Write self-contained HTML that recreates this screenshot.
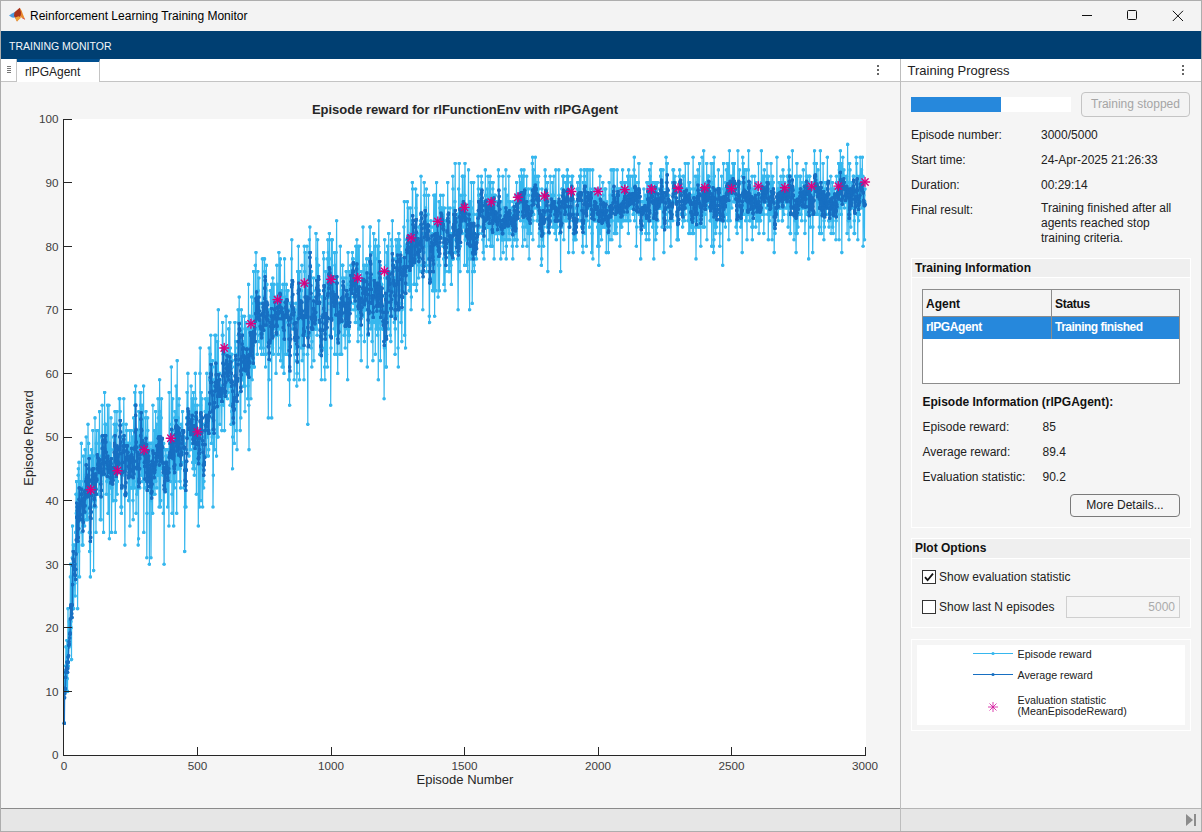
<!DOCTYPE html>
<html><head><meta charset="utf-8"><style>
*{box-sizing:border-box}
html,body{margin:0;padding:0}
body{width:1202px;height:832px;position:relative;overflow:hidden;background:#f5f5f5;font-family:"Liberation Sans",sans-serif;color:#212121}
.a{position:absolute}
.t{position:absolute;white-space:pre;font-size:12px;line-height:15px}
.b{font-weight:bold}
</style></head><body>
<!-- title bar -->
<div class="a" style="left:0;top:0;width:1202px;height:31px;background:#f3f3f3"></div>
<svg class="a" style="left:8px;top:7px" width="18" height="16" viewBox="0 0 18 16">
<polygon points="1,8.4 4.5,6.2 7.5,4.8 8.5,8 6.5,10.8 4,10.6" fill="#4a9be0"/>
<polygon points="6.5,5.2 11.7,0.8 14.2,6 12.5,9.5 9,14.6 7.5,11 6,9" fill="#a8321c"/>
<polygon points="11.7,0.8 13.5,3.5 15,7.5 17.2,12.8 14.2,11.2 12.5,9.5 13.2,6" fill="#e9872c"/>
<polygon points="6.8,10.8 10.5,9.2 13.2,10.6 9,14.6" fill="#f0a23a"/>
<polygon points="14.2,11.2 17.2,12.8 16,11" fill="#d0506a"/>
</svg>
<div class="t" style="left:30px;top:9px;color:#000">Reinforcement Learning Training Monitor</div>
<div class="a" style="left:1082px;top:15px;width:10px;height:1px;background:#111"></div>
<div class="a" style="left:1127px;top:10px;width:10px;height:10px;border:1px solid #111;border-radius:1.5px"></div>
<svg class="a" style="left:1172px;top:9.5px" width="12" height="12" viewBox="0 0 12 12"><path d="M0.8 0.8L11 11M11 0.8L0.8 11" stroke="#111" stroke-width="1"/></svg>
<!-- blue toolstrip -->
<div class="a" style="left:0;top:31px;width:1202px;height:28px;background:#003f72"></div>
<div class="t" style="left:9px;top:39px;font-size:10.5px;color:#f4f7fa">TRAINING MONITOR</div>
<!-- left document tab bar -->
<div class="a" style="left:0;top:59px;width:900px;height:23px;background:#fff;border-bottom:1px solid #c4c4c4"></div>
<div class="a" style="left:0;top:59px;width:17px;height:23px;background:#fff;border-right:1px solid #c4c4c4;border-bottom:1px solid #c4c4c4"></div>
<div class="a" style="left:7px;top:66px;width:4px;height:1px;background:#777;box-shadow:0 2px 0 #777,0 4px 0 #777,0 6px 0 #777"></div>
<div class="a" style="left:17px;top:59px;width:83px;height:23px;background:#fff;border-top:3px solid #004f8f;border-right:1px solid #c4c4c4"></div>
<div class="t" style="left:25px;top:65px;color:#222">rlPGAgent</div>
<div class="a" style="left:877px;top:65px;width:2px;height:2px;background:#666;box-shadow:0 4px 0 #666,0 8px 0 #666"></div>
<!-- plot panel -->
<div class="a" style="left:0;top:82px;width:900px;height:726px;background:#f5f5f5"></div>
<svg width="900" height="808" style="position:absolute;left:0;top:0">
<defs>
<marker id="ml" markerWidth="4" markerHeight="4" refX="2" refY="2" markerUnits="userSpaceOnUse"><circle cx="2" cy="2" r="1.8" fill="#36B7EE"/></marker>
<marker id="md" markerWidth="4" markerHeight="4" refX="2" refY="2" markerUnits="userSpaceOnUse"><circle cx="2" cy="2" r="1.9" fill="#176FC2"/></marker>
<g id="star" stroke="#D9007F" stroke-width="1.4" stroke-linecap="round"><line x1="-4.5" y1="0" x2="4.5" y2="0"/><line x1="0" y1="-4.5" x2="0" y2="4.5"/><line x1="-3.2" y1="-3.2" x2="3.2" y2="3.2"/><line x1="-3.2" y1="3.2" x2="3.2" y2="-3.2"/></g>
</defs>
<rect x="64" y="119" width="802" height="636" fill="#fff"/>
<polyline points="64.3,723.2 64.5,672.3 64.8,685.0 65.1,672.3 65.3,691.4 65.6,666.0 65.9,646.9 66.1,672.3 66.4,685.0 66.7,666.0 66.9,640.5 67.2,678.7 67.5,691.4 67.7,666.0 68.0,608.7 68.3,666.0 68.5,646.9 68.8,640.5 69.1,646.9 69.3,621.4 69.6,634.2 69.9,627.8 70.1,634.2 70.4,576.9 70.7,564.2 70.9,621.4 71.2,627.8 71.5,659.6 71.7,596.0 72.0,583.3 72.3,557.8 72.5,526.0 72.8,564.2 73.1,564.2 73.3,545.1 73.6,608.7 73.9,564.2 74.1,545.1 74.4,583.3 74.7,570.6 74.9,583.3 75.2,596.0 75.5,564.2 75.7,532.4 76.0,494.2 76.3,513.3 76.5,481.5 76.8,494.2 77.1,551.5 77.3,513.3 77.6,608.7 77.9,538.8 78.2,475.2 78.4,468.8 78.7,551.5 79.0,462.4 79.2,481.5 79.5,576.9 79.8,519.7 80.0,481.5 80.3,513.3 80.6,507.0 80.8,507.0 81.1,500.6 81.4,443.4 81.6,487.9 81.9,532.4 82.2,545.1 82.4,507.0 82.7,526.0 83.0,545.1 83.2,487.9 83.5,456.1 83.8,481.5 84.0,519.7 84.3,513.3 84.6,526.0 84.8,519.7 85.1,449.7 85.4,475.2 85.6,481.5 85.9,481.5 86.2,437.0 86.4,519.7 86.7,468.8 87.0,487.9 87.2,487.9 87.5,519.7 87.8,507.0 88.0,424.3 88.3,481.5 88.6,443.4 88.8,487.9 89.1,456.1 89.4,532.4 89.6,551.5 89.9,513.3 90.2,532.4 90.4,576.9 90.7,513.3 91.0,456.1 91.2,481.5 91.5,449.7 91.8,507.0 92.0,456.1 92.3,500.6 92.6,481.5 92.8,430.6 93.1,475.2 93.4,456.1 93.6,570.6 93.9,487.9 94.2,507.0 94.4,468.8 94.7,494.2 95.0,417.9 95.2,500.6 95.5,487.9 95.8,507.0 96.0,532.4 96.3,443.4 96.6,430.6 96.8,481.5 97.1,456.1 97.4,462.4 97.6,456.1 97.9,468.8 98.2,475.2 98.4,430.6 98.7,494.2 99.0,481.5 99.2,481.5 99.5,411.6 99.8,456.1 100.0,468.8 100.3,519.7 100.6,494.2 100.8,481.5 101.1,519.7 101.4,437.0 101.6,437.0 101.9,443.4 102.2,405.2 102.4,456.1 102.7,462.4 103.0,443.4 103.2,475.2 103.5,532.4 103.8,443.4 104.0,449.7 104.3,468.8 104.6,392.5 104.9,443.4 105.1,424.3 105.4,449.7 105.7,468.8 105.9,424.3 106.2,494.2 106.5,475.2 106.7,449.7 107.0,481.5 107.3,481.5 107.5,405.2 107.8,462.4 108.1,513.3 108.3,481.5 108.6,494.2 108.9,405.2 109.1,443.4 109.4,538.8 109.7,443.4 109.9,475.2 110.2,487.9 110.5,468.8 110.7,468.8 111.0,417.9 111.3,449.7 111.5,532.4 111.8,487.9 112.1,468.8 112.3,468.8 112.6,462.4 112.9,500.6 113.1,500.6 113.4,437.0 113.7,462.4 113.9,437.0 114.2,424.3 114.5,456.1 114.7,449.7 115.0,411.6 115.3,532.4 115.5,456.1 115.8,500.6 116.1,468.8 116.3,424.3 116.6,430.6 116.9,411.6 117.1,494.2 117.4,481.5 117.7,456.1 117.9,468.8 118.2,462.4 118.5,456.1 118.7,468.8 119.0,462.4 119.3,398.8 119.5,456.1 119.8,398.8 120.1,411.6 120.3,437.0 120.6,456.1 120.9,507.0 121.1,456.1 121.4,513.3 121.7,507.0 121.9,443.4 122.2,437.0 122.5,462.4 122.7,462.4 123.0,424.3 123.3,468.8 123.5,443.4 123.8,398.8 124.1,443.4 124.3,475.2 124.6,494.2 124.9,545.1 125.1,475.2 125.4,487.9 125.7,462.4 125.9,443.4 126.2,424.3 126.5,468.8 126.7,430.6 127.0,462.4 127.3,443.4 127.5,456.1 127.8,468.8 128.1,468.8 128.3,494.2 128.6,500.6 128.9,443.4 129.1,456.1 129.4,449.7 129.7,430.6 129.9,526.0 130.2,487.9 130.5,456.1 130.8,449.7 131.0,462.4 131.3,430.6 131.6,443.4 131.8,487.9 132.1,487.9 132.4,437.0 132.6,443.4 132.9,500.6 133.2,519.7 133.4,449.7 133.7,417.9 134.0,481.5 134.2,468.8 134.5,487.9 134.8,392.5 135.0,405.2 135.3,405.2 135.6,386.1 135.8,437.0 136.1,513.3 136.4,468.8 136.6,430.6 136.9,494.2 137.2,430.6 137.4,437.0 137.7,475.2 138.0,437.0 138.2,545.1 138.5,538.8 138.8,411.6 139.0,462.4 139.3,456.1 139.6,475.2 139.8,487.9 140.1,392.5 140.4,417.9 140.6,405.2 140.9,392.5 141.2,456.1 141.4,475.2 141.7,424.3 142.0,456.1 142.2,405.2 142.5,481.5 142.8,437.0 143.0,449.7 143.3,462.4 143.6,386.1 143.8,532.4 144.1,443.4 144.4,487.9 144.6,481.5 144.9,449.7 145.2,443.4 145.4,417.9 145.7,468.8 146.0,411.6 146.2,487.9 146.5,437.0 146.8,557.8 147.0,513.3 147.3,456.1 147.6,417.9 147.8,430.6 148.1,475.2 148.4,475.2 148.6,481.5 148.9,443.4 149.2,468.8 149.4,564.2 149.7,449.7 150.0,468.8 150.2,443.4 150.5,475.2 150.8,487.9 151.0,557.8 151.3,500.6 151.6,468.8 151.8,443.4 152.1,449.7 152.4,443.4 152.6,513.3 152.9,405.2 153.2,456.1 153.4,494.2 153.7,481.5 154.0,487.9 154.2,468.8 154.5,430.6 154.8,468.8 155.0,494.2 155.3,462.4 155.6,411.6 155.8,481.5 156.1,437.0 156.4,475.2 156.6,424.3 156.9,487.9 157.2,462.4 157.4,437.0 157.7,475.2 158.0,398.8 158.3,417.9 158.5,456.1 158.8,475.2 159.1,507.0 159.3,468.8 159.6,379.8 159.9,411.6 160.1,417.9 160.4,507.0 160.7,500.6 160.9,462.4 161.2,417.9 161.5,398.8 161.7,449.7 162.0,468.8 162.3,456.1 162.5,462.4 162.8,475.2 163.1,456.1 163.3,513.3 163.6,443.4 163.9,449.7 164.1,564.2 164.4,475.2 164.7,475.2 164.9,481.5 165.2,462.4 165.5,468.8 165.7,449.7 166.0,449.7 166.3,487.9 166.5,456.1 166.8,487.9 167.1,475.2 167.3,462.4 167.6,507.0 167.9,468.8 168.1,449.7 168.4,456.1 168.7,462.4 168.9,526.0 169.2,392.5 169.5,449.7 169.7,443.4 170.0,449.7 170.3,481.5 170.5,449.7 170.8,449.7 171.1,456.1 171.3,367.0 171.6,424.3 171.9,494.2 172.1,513.3 172.4,456.1 172.7,398.8 172.9,430.6 173.2,468.8 173.5,456.1 173.7,526.0 174.0,449.7 174.3,443.4 174.5,487.9 174.8,417.9 175.1,411.6 175.3,411.6 175.6,411.6 175.9,481.5 176.1,386.1 176.4,437.0 176.7,513.3 176.9,437.0 177.2,360.7 177.5,468.8 177.7,468.8 178.0,417.9 178.3,449.7 178.5,468.8 178.8,405.2 179.1,398.8 179.3,443.4 179.6,449.7 179.9,481.5 180.1,468.8 180.4,437.0 180.7,487.9 180.9,449.7 181.2,424.3 181.5,462.4 181.7,449.7 182.0,430.6 182.3,430.6 182.5,411.6 182.8,430.6 183.1,449.7 183.3,437.0 183.6,430.6 183.9,487.9 184.2,437.0 184.4,443.4 184.7,551.5 185.0,507.0 185.2,462.4 185.5,462.4 185.8,468.8 186.0,507.0 186.3,449.7 186.6,417.9 186.8,424.3 187.1,392.5 187.4,437.0 187.6,417.9 187.9,373.4 188.2,437.0 188.4,424.3 188.7,417.9 189.0,456.1 189.2,411.6 189.5,430.6 189.8,430.6 190.0,417.9 190.3,449.7 190.6,443.4 190.8,417.9 191.1,386.1 191.4,424.3 191.6,437.0 191.9,430.6 192.2,398.8 192.4,437.0 192.7,462.4 193.0,468.8 193.2,449.7 193.5,392.5 193.8,411.6 194.0,405.2 194.3,475.2 194.6,468.8 194.8,430.6 195.1,462.4 195.4,373.4 195.6,398.8 195.9,417.9 196.2,411.6 196.4,494.2 196.7,417.9 197.0,443.4 197.2,405.2 197.5,462.4 197.8,462.4 198.0,437.0 198.3,526.0 198.6,430.6 198.8,430.6 199.1,443.4 199.4,437.0 199.6,507.0 199.9,373.4 200.2,348.0 200.4,437.0 200.7,405.2 201.0,500.6 201.2,392.5 201.5,430.6 201.8,430.6 202.0,398.8 202.3,437.0 202.6,507.0 202.8,449.7 203.1,468.8 203.4,462.4 203.6,487.9 203.9,481.5 204.2,424.3 204.4,456.1 204.7,437.0 205.0,424.3 205.2,411.6 205.5,398.8 205.8,411.6 206.0,430.6 206.3,437.0 206.6,456.1 206.8,373.4 207.1,405.2 207.4,437.0 207.6,430.6 207.9,430.6 208.2,398.8 208.4,456.1 208.7,449.7 209.0,430.6 209.2,348.0 209.5,379.8 209.8,411.6 210.0,392.5 210.3,354.3 210.6,373.4 210.8,335.2 211.1,367.0 211.4,443.4 211.7,392.5 211.9,417.9 212.2,437.0 212.5,360.7 212.7,367.0 213.0,507.0 213.3,475.2 213.5,392.5 213.8,405.2 214.1,386.1 214.3,379.8 214.6,449.7 214.9,335.2 215.1,379.8 215.4,367.0 215.7,398.8 215.9,335.2 216.2,392.5 216.5,456.1 216.7,367.0 217.0,379.8 217.3,437.0 217.5,341.6 217.8,379.8 218.1,437.0 218.3,309.8 218.6,405.2 218.9,405.2 219.1,386.1 219.4,392.5 219.7,373.4 219.9,424.3 220.2,379.8 220.5,386.1 220.7,392.5 221.0,386.1 221.3,398.8 221.5,398.8 221.8,430.6 222.1,392.5 222.3,335.2 222.6,322.5 222.9,335.2 223.1,354.3 223.4,405.2 223.7,348.0 223.9,379.8 224.2,379.8 224.5,430.6 224.7,386.1 225.0,392.5 225.3,392.5 225.5,354.3 225.8,386.1 226.1,316.2 226.3,367.0 226.6,379.8 226.9,360.7 227.1,354.3 227.4,398.8 227.7,386.1 227.9,348.0 228.2,392.5 228.5,373.4 228.7,328.9 229.0,379.8 229.3,367.0 229.5,386.1 229.8,322.5 230.1,405.2 230.3,348.0 230.6,379.8 230.9,354.3 231.1,424.3 231.4,360.7 231.7,411.6 231.9,354.3 232.2,360.7 232.5,468.8 232.7,437.0 233.0,398.8 233.3,424.3 233.5,386.1 233.8,405.2 234.1,386.1 234.3,443.4 234.6,367.0 234.9,322.5 235.1,360.7 235.4,386.1 235.7,341.6 235.9,386.1 236.2,430.6 236.5,360.7 236.7,379.8 237.0,449.7 237.3,354.3 237.6,360.7 237.8,348.0 238.1,309.8 238.4,335.2 238.6,354.3 238.9,322.5 239.2,297.1 239.4,335.2 239.7,341.6 240.0,392.5 240.2,430.6 240.5,354.3 240.8,417.9 241.0,360.7 241.3,309.8 241.6,341.6 241.8,379.8 242.1,328.9 242.4,316.2 242.6,379.8 242.9,341.6 243.2,373.4 243.4,367.0 243.7,386.1 244.0,373.4 244.2,348.0 244.5,316.2 244.8,386.1 245.0,411.6 245.3,367.0 245.6,367.0 245.8,322.5 246.1,367.0 246.4,360.7 246.6,328.9 246.9,367.0 247.2,373.4 247.4,348.0 247.7,398.8 248.0,386.1 248.2,360.7 248.5,284.4 248.8,405.2 249.0,449.7 249.3,316.2 249.6,316.2 249.8,322.5 250.1,341.6 250.4,367.0 250.6,328.9 250.9,398.8 251.2,341.6 251.4,316.2 251.7,297.1 252.0,328.9 252.2,379.8 252.5,354.3 252.8,367.0 253.0,360.7 253.3,354.3 253.6,271.6 253.8,303.4 254.1,367.0 254.4,367.0 254.6,328.9 254.9,303.4 255.2,341.6 255.4,265.3 255.7,328.9 256.0,252.6 256.2,316.2 256.5,297.1 256.8,316.2 257.0,309.8 257.3,354.3 257.6,309.8 257.8,271.6 258.1,290.7 258.4,316.2 258.6,328.9 258.9,278.0 259.2,341.6 259.4,335.2 259.7,316.2 260.0,303.4 260.2,335.2 260.5,348.0 260.8,335.2 261.0,322.5 261.3,328.9 261.6,354.3 261.8,328.9 262.1,303.4 262.4,258.9 262.6,322.5 262.9,303.4 263.2,348.0 263.4,322.5 263.7,354.3 264.0,297.1 264.2,258.9 264.5,258.9 264.8,271.6 265.1,297.1 265.3,316.2 265.6,367.0 265.9,290.7 266.1,354.3 266.4,265.3 266.7,316.2 266.9,284.4 267.2,341.6 267.5,316.2 267.7,316.2 268.0,341.6 268.3,417.9 268.5,322.5 268.8,335.2 269.1,379.8 269.3,309.8 269.6,360.7 269.9,328.9 270.1,322.5 270.4,290.7 270.7,328.9 270.9,341.6 271.2,297.1 271.5,284.4 271.7,417.9 272.0,303.4 272.3,335.2 272.5,348.0 272.8,278.0 273.1,316.2 273.3,354.3 273.6,335.2 273.9,297.1 274.1,284.4 274.4,322.5 274.7,309.8 274.9,297.1 275.2,328.9 275.5,309.8 275.7,316.2 276.0,373.4 276.3,335.2 276.5,335.2 276.8,265.3 277.1,322.5 277.3,328.9 277.6,284.4 277.9,335.2 278.1,290.7 278.4,354.3 278.7,303.4 278.9,252.6 279.2,328.9 279.5,297.1 279.7,322.5 280.0,265.3 280.3,258.9 280.5,360.7 280.8,348.0 281.1,303.4 281.3,290.7 281.6,290.7 281.9,309.8 282.1,367.0 282.4,303.4 282.7,316.2 282.9,284.4 283.2,367.0 283.5,303.4 283.7,322.5 284.0,373.4 284.3,328.9 284.5,258.9 284.8,297.1 285.1,322.5 285.3,303.4 285.6,354.3 285.9,303.4 286.1,303.4 286.4,284.4 286.7,316.2 286.9,290.7 287.2,309.8 287.5,354.3 287.7,309.8 288.0,290.7 288.3,322.5 288.5,322.5 288.8,379.8 289.1,379.8 289.3,348.0 289.6,405.2 289.9,341.6 290.1,303.4 290.4,335.2 290.7,309.8 290.9,303.4 291.2,322.5 291.5,258.9 291.8,239.8 292.0,297.1 292.3,284.4 292.6,328.9 292.8,322.5 293.1,303.4 293.4,309.8 293.6,309.8 293.9,316.2 294.2,379.8 294.4,328.9 294.7,354.3 295.0,309.8 295.2,328.9 295.5,348.0 295.8,322.5 296.0,303.4 296.3,348.0 296.6,360.7 296.8,386.1 297.1,373.4 297.4,341.6 297.6,271.6 297.9,316.2 298.2,290.7 298.4,246.2 298.7,290.7 299.0,309.8 299.2,309.8 299.5,379.8 299.8,271.6 300.0,297.1 300.3,303.4 300.6,335.2 300.8,297.1 301.1,348.0 301.4,290.7 301.6,309.8 301.9,265.3 302.2,360.7 302.4,328.9 302.7,322.5 303.0,316.2 303.2,348.0 303.5,328.9 303.8,354.3 304.0,379.8 304.3,246.2 304.6,271.6 304.8,335.2 305.1,252.6 305.4,316.2 305.6,309.8 305.9,335.2 306.2,335.2 306.4,290.7 306.7,284.4 307.0,246.2 307.2,328.9 307.5,354.3 307.8,424.3 308.0,335.2 308.3,290.7 308.6,322.5 308.8,290.7 309.1,252.6 309.4,239.8 309.6,278.0 309.9,227.1 310.2,265.3 310.4,322.5 310.7,335.2 311.0,316.2 311.2,348.0 311.5,271.6 311.8,367.0 312.0,341.6 312.3,316.2 312.6,316.2 312.8,303.4 313.1,297.1 313.4,309.8 313.6,278.0 313.9,360.7 314.2,316.2 314.4,328.9 314.7,309.8 315.0,303.4 315.2,328.9 315.5,328.9 315.8,290.7 316.0,233.5 316.3,328.9 316.6,258.9 316.8,290.7 317.1,335.2 317.4,303.4 317.6,239.8 317.9,278.0 318.2,297.1 318.5,265.3 318.7,316.2 319.0,316.2 319.3,322.5 319.5,290.7 319.8,354.3 320.1,328.9 320.3,354.3 320.6,354.3 320.9,341.6 321.1,348.0 321.4,379.8 321.7,328.9 321.9,297.1 322.2,297.1 322.5,348.0 322.7,316.2 323.0,316.2 323.3,309.8 323.5,252.6 323.8,258.9 324.1,290.7 324.3,322.5 324.6,367.0 324.9,379.8 325.1,309.8 325.4,316.2 325.7,271.6 325.9,309.8 326.2,360.7 326.5,354.3 326.7,309.8 327.0,303.4 327.3,258.9 327.5,367.0 327.8,239.8 328.1,297.1 328.3,252.6 328.6,284.4 328.9,297.1 329.1,271.6 329.4,233.5 329.7,258.9 329.9,303.4 330.2,335.2 330.5,290.7 330.7,405.2 331.0,348.0 331.3,309.8 331.5,239.8 331.8,297.1 332.1,297.1 332.3,239.8 332.6,316.2 332.9,309.8 333.1,309.8 333.4,297.1 333.7,278.0 333.9,316.2 334.2,328.9 334.5,252.6 334.7,354.3 335.0,265.3 335.3,297.1 335.5,335.2 335.8,322.5 336.1,252.6 336.3,284.4 336.6,220.8 336.9,303.4 337.1,354.3 337.4,322.5 337.7,373.4 337.9,341.6 338.2,322.5 338.5,303.4 338.7,316.2 339.0,328.9 339.3,309.8 339.5,303.4 339.8,303.4 340.1,354.3 340.3,246.2 340.6,316.2 340.9,316.2 341.1,322.5 341.4,290.7 341.7,354.3 341.9,322.5 342.2,278.0 342.5,265.3 342.7,265.3 343.0,297.1 343.3,303.4 343.5,303.4 343.8,278.0 344.1,335.2 344.4,297.1 344.6,316.2 344.9,335.2 345.2,348.0 345.4,328.9 345.7,303.4 346.0,278.0 346.2,271.6 346.5,297.1 346.8,303.4 347.0,322.5 347.3,322.5 347.6,379.8 347.8,284.4 348.1,252.6 348.4,290.7 348.6,335.2 348.9,328.9 349.2,341.6 349.4,335.2 349.7,271.6 350.0,290.7 350.2,271.6 350.5,278.0 350.8,265.3 351.0,303.4 351.3,309.8 351.6,278.0 351.8,290.7 352.1,284.4 352.4,252.6 352.6,258.9 352.9,265.3 353.2,258.9 353.4,278.0 353.7,297.1 354.0,303.4 354.2,290.7 354.5,309.8 354.8,278.0 355.0,303.4 355.3,322.5 355.6,265.3 355.8,246.2 356.1,265.3 356.4,297.1 356.6,271.6 356.9,239.8 357.2,322.5 357.4,316.2 357.7,309.8 358.0,341.6 358.2,246.2 358.5,328.9 358.8,316.2 359.0,297.1 359.3,246.2 359.6,303.4 359.8,328.9 360.1,322.5 360.4,290.7 360.6,316.2 360.9,335.2 361.2,360.7 361.4,271.6 361.7,290.7 362.0,278.0 362.2,309.8 362.5,290.7 362.8,297.1 363.0,227.1 363.3,316.2 363.6,265.3 363.8,297.1 364.1,303.4 364.4,341.6 364.6,297.1 364.9,265.3 365.2,284.4 365.4,309.8 365.7,309.8 366.0,284.4 366.2,278.0 366.5,258.9 366.8,278.0 367.0,265.3 367.3,367.0 367.6,303.4 367.8,335.2 368.1,328.9 368.4,335.2 368.6,258.9 368.9,309.8 369.2,322.5 369.4,284.4 369.7,246.2 370.0,227.1 370.2,227.1 370.5,290.7 370.8,328.9 371.1,297.1 371.3,303.4 371.6,297.1 371.9,252.6 372.1,341.6 372.4,290.7 372.7,316.2 372.9,360.7 373.2,278.0 373.5,290.7 373.7,233.5 374.0,322.5 374.3,278.0 374.5,303.4 374.8,278.0 375.1,246.2 375.3,354.3 375.6,239.8 375.9,316.2 376.1,328.9 376.4,290.7 376.7,290.7 376.9,328.9 377.2,258.9 377.5,246.2 377.7,335.2 378.0,309.8 378.3,379.8 378.5,246.2 378.8,220.8 379.1,265.3 379.3,252.6 379.6,322.5 379.9,328.9 380.1,265.3 380.4,360.7 380.7,309.8 380.9,290.7 381.2,271.6 381.5,284.4 381.7,284.4 382.0,309.8 382.3,328.9 382.5,322.5 382.8,316.2 383.1,328.9 383.3,328.9 383.6,309.8 383.9,341.6 384.1,398.8 384.4,348.0 384.7,239.8 384.9,278.0 385.2,297.1 385.5,335.2 385.7,316.2 386.0,367.0 386.3,367.0 386.5,309.8 386.8,252.6 387.1,265.3 387.3,316.2 387.6,246.2 387.9,278.0 388.1,284.4 388.4,328.9 388.7,233.5 388.9,271.6 389.2,278.0 389.5,309.8 389.7,278.0 390.0,278.0 390.3,335.2 390.5,309.8 390.8,341.6 391.1,316.2 391.3,239.8 391.6,290.7 391.9,271.6 392.1,246.2 392.4,220.8 392.7,271.6 392.9,316.2 393.2,271.6 393.5,258.9 393.7,284.4 394.0,284.4 394.3,322.5 394.5,278.0 394.8,309.8 395.1,354.3 395.3,328.9 395.6,278.0 395.9,239.8 396.1,316.2 396.4,258.9 396.7,246.2 396.9,246.2 397.2,284.4 397.5,239.8 397.8,290.7 398.0,348.0 398.3,367.0 398.6,303.4 398.8,233.5 399.1,284.4 399.4,290.7 399.6,239.8 399.9,246.2 400.2,278.0 400.4,252.6 400.7,258.9 401.0,322.5 401.2,258.9 401.5,303.4 401.8,341.6 402.0,309.8 402.3,271.6 402.6,258.9 402.8,278.0 403.1,258.9 403.4,278.0 403.6,290.7 403.9,227.1 404.2,290.7 404.4,201.7 404.7,335.2 405.0,284.4 405.2,246.2 405.5,348.0 405.8,252.6 406.0,246.2 406.3,246.2 406.6,239.8 406.8,265.3 407.1,265.3 407.4,201.7 407.6,220.8 407.9,284.4 408.2,208.0 408.4,271.6 408.7,252.6 409.0,239.8 409.2,290.7 409.5,278.0 409.8,290.7 410.0,239.8 410.3,208.0 410.6,239.8 410.8,233.5 411.1,309.8 411.4,297.1 411.6,220.8 411.9,265.3 412.2,220.8 412.4,182.6 412.7,189.0 413.0,265.3 413.2,246.2 413.5,252.6 413.8,246.2 414.0,284.4 414.3,284.4 414.6,239.8 414.8,239.8 415.1,227.1 415.4,239.8 415.6,189.0 415.9,208.0 416.2,233.5 416.4,290.7 416.7,284.4 417.0,195.3 417.2,258.9 417.5,233.5 417.8,246.2 418.0,258.9 418.3,258.9 418.6,278.0 418.8,265.3 419.1,227.1 419.4,227.1 419.6,258.9 419.9,271.6 420.2,239.8 420.4,220.8 420.7,214.4 421.0,176.2 421.2,214.4 421.5,239.8 421.8,246.2 422.0,265.3 422.3,271.6 422.6,271.6 422.8,309.8 423.1,265.3 423.4,233.5 423.6,252.6 423.9,252.6 424.2,182.6 424.4,195.3 424.7,227.1 425.0,220.8 425.3,227.1 425.5,208.0 425.8,246.2 426.1,265.3 426.3,189.0 426.6,271.6 426.9,227.1 427.1,220.8 427.4,233.5 427.7,227.1 427.9,214.4 428.2,258.9 428.5,195.3 428.7,258.9 429.0,265.3 429.3,316.2 429.5,322.5 429.8,252.6 430.1,239.8 430.3,278.0 430.6,265.3 430.9,220.8 431.1,227.1 431.4,252.6 431.7,246.2 431.9,233.5 432.2,265.3 432.5,290.7 432.7,246.2 433.0,265.3 433.3,290.7 433.5,227.1 433.8,195.3 434.1,239.8 434.3,220.8 434.6,316.2 434.9,246.2 435.1,195.3 435.4,195.3 435.7,239.8 435.9,290.7 436.2,258.9 436.5,182.6 436.7,246.2 437.0,220.8 437.3,258.9 437.5,220.8 437.8,233.5 438.1,297.1 438.3,239.8 438.6,265.3 438.9,246.2 439.1,201.7 439.4,290.7 439.7,265.3 439.9,208.0 440.2,227.1 440.5,195.3 440.7,220.8 441.0,214.4 441.3,233.5 441.5,208.0 441.8,208.0 442.1,233.5 442.3,233.5 442.6,220.8 442.9,246.2 443.1,195.3 443.4,227.1 443.7,258.9 443.9,284.4 444.2,227.1 444.5,208.0 444.7,258.9 445.0,290.7 445.3,239.8 445.5,271.6 445.8,265.3 446.1,220.8 446.3,239.8 446.6,220.8 446.9,252.6 447.1,220.8 447.4,227.1 447.7,182.6 447.9,208.0 448.2,233.5 448.5,214.4 448.7,271.6 449.0,252.6 449.3,233.5 449.5,233.5 449.8,271.6 450.1,208.0 450.3,233.5 450.6,239.8 450.9,265.3 451.1,239.8 451.4,284.4 451.7,233.5 452.0,252.6 452.2,258.9 452.5,258.9 452.8,176.2 453.0,189.0 453.3,258.9 453.6,239.8 453.8,208.0 454.1,233.5 454.4,233.5 454.6,220.8 454.9,201.7 455.2,163.5 455.4,252.6 455.7,252.6 456.0,239.8 456.2,246.2 456.5,246.2 456.8,220.8 457.0,239.8 457.3,233.5 457.6,214.4 457.8,258.9 458.1,309.8 458.4,258.9 458.6,189.0 458.9,227.1 459.2,163.5 459.4,246.2 459.7,220.8 460.0,271.6 460.2,246.2 460.5,227.1 460.8,195.3 461.0,214.4 461.3,214.4 461.6,208.0 461.8,233.5 462.1,233.5 462.4,176.2 462.6,176.2 462.9,227.1 463.2,208.0 463.4,220.8 463.7,208.0 464.0,220.8 464.2,176.2 464.5,265.3 464.8,195.3 465.0,163.5 465.3,239.8 465.6,239.8 465.8,227.1 466.1,220.8 466.4,227.1 466.6,265.3 466.9,208.0 467.2,239.8 467.4,233.5 467.7,271.6 468.0,233.5 468.2,214.4 468.5,169.9 468.8,233.5 469.0,220.8 469.3,258.9 469.6,309.8 469.8,201.7 470.1,233.5 470.4,227.1 470.6,201.7 470.9,252.6 471.2,258.9 471.4,182.6 471.7,227.1 472.0,208.0 472.2,303.4 472.5,271.6 472.8,252.6 473.0,233.5 473.3,233.5 473.6,182.6 473.8,214.4 474.1,265.3 474.4,271.6 474.6,258.9 474.9,239.8 475.2,233.5 475.4,246.2 475.7,252.6 476.0,246.2 476.2,239.8 476.5,258.9 476.8,214.4 477.0,227.1 477.3,239.8 477.6,233.5 477.9,214.4 478.1,176.2 478.4,189.0 478.7,195.3 478.9,233.5 479.2,214.4 479.5,201.7 479.7,227.1 480.0,201.7 480.3,214.4 480.5,195.3 480.8,195.3 481.1,189.0 481.3,176.2 481.6,208.0 481.9,182.6 482.1,233.5 482.4,227.1 482.7,201.7 482.9,239.8 483.2,252.6 483.5,214.4 483.7,214.4 484.0,258.9 484.3,201.7 484.5,201.7 484.8,227.1 485.1,214.4 485.3,169.9 485.6,195.3 485.9,220.8 486.1,201.7 486.4,246.2 486.7,208.0 486.9,220.8 487.2,189.0 487.5,227.1 487.7,227.1 488.0,176.2 488.3,227.1 488.5,227.1 488.8,220.8 489.1,239.8 489.3,201.7 489.6,182.6 489.9,227.1 490.1,176.2 490.4,246.2 490.7,182.6 490.9,201.7 491.2,195.3 491.5,233.5 491.7,227.1 492.0,246.2 492.3,246.2 492.5,208.0 492.8,189.0 493.1,182.6 493.3,214.4 493.6,201.7 493.9,201.7 494.1,258.9 494.4,214.4 494.7,195.3 494.9,233.5 495.2,195.3 495.5,220.8 495.7,233.5 496.0,201.7 496.3,214.4 496.5,233.5 496.8,227.1 497.1,233.5 497.3,214.4 497.6,239.8 497.9,201.7 498.1,201.7 498.4,169.9 498.7,201.7 498.9,176.2 499.2,233.5 499.5,227.1 499.7,208.0 500.0,233.5 500.3,201.7 500.5,233.5 500.8,258.9 501.1,201.7 501.3,227.1 501.6,220.8 501.9,239.8 502.1,239.8 502.4,239.8 502.7,227.1 502.9,176.2 503.2,252.6 503.5,208.0 503.7,233.5 504.0,233.5 504.3,208.0 504.6,214.4 504.8,239.8 505.1,189.0 505.4,227.1 505.6,214.4 505.9,169.9 506.2,258.9 506.4,246.2 506.7,201.7 507.0,227.1 507.2,195.3 507.5,227.1 507.8,220.8 508.0,239.8 508.3,214.4 508.6,227.1 508.8,176.2 509.1,214.4 509.4,233.5 509.6,201.7 509.9,239.8 510.2,201.7 510.4,220.8 510.7,227.1 511.0,227.1 511.2,214.4 511.5,214.4 511.8,233.5 512.0,208.0 512.3,246.2 512.6,227.1 512.8,258.9 513.1,208.0 513.4,208.0 513.6,201.7 513.9,201.7 514.2,214.4 514.4,227.1 514.7,239.8 515.0,239.8 515.2,214.4 515.5,233.5 515.8,214.4 516.0,195.3 516.3,195.3 516.6,182.6 516.8,246.2 517.1,239.8 517.4,201.7 517.6,208.0 517.9,195.3 518.2,214.4 518.4,195.3 518.7,195.3 519.0,201.7 519.2,201.7 519.5,176.2 519.8,201.7 520.0,208.0 520.3,195.3 520.6,220.8 520.8,182.6 521.1,195.3 521.4,169.9 521.6,208.0 521.9,214.4 522.2,176.2 522.4,214.4 522.7,246.2 523.0,227.1 523.2,220.8 523.5,176.2 523.8,176.2 524.0,169.9 524.3,220.8 524.6,208.0 524.8,239.8 525.1,189.0 525.4,220.8 525.6,189.0 525.9,201.7 526.2,227.1 526.4,214.4 526.7,176.2 527.0,246.2 527.2,208.0 527.5,201.7 527.8,201.7 528.0,233.5 528.3,189.0 528.6,220.8 528.8,195.3 529.1,258.9 529.4,227.1 529.6,201.7 529.9,214.4 530.2,214.4 530.4,214.4 530.7,233.5 531.0,189.0 531.2,208.0 531.5,214.4 531.8,214.4 532.1,201.7 532.3,163.5 532.6,157.2 532.9,239.8 533.1,220.8 533.4,169.9 533.7,214.4 533.9,176.2 534.2,182.6 534.5,195.3 534.7,208.0 535.0,182.6 535.3,157.2 535.5,201.7 535.8,201.7 536.1,201.7 536.3,182.6 536.6,208.0 536.9,176.2 537.1,220.8 537.4,201.7 537.7,220.8 537.9,182.6 538.2,208.0 538.5,176.2 538.7,189.0 539.0,246.2 539.3,233.5 539.5,220.8 539.8,233.5 540.1,208.0 540.3,208.0 540.6,214.4 540.9,220.8 541.1,220.8 541.4,265.3 541.7,258.9 541.9,189.0 542.2,239.8 542.5,214.4 542.7,208.0 543.0,201.7 543.3,227.1 543.5,246.2 543.8,233.5 544.1,201.7 544.3,195.3 544.6,220.8 544.9,208.0 545.1,169.9 545.4,176.2 545.7,195.3 545.9,201.7 546.2,214.4 546.5,195.3 546.7,189.0 547.0,227.1 547.3,182.6 547.5,182.6 547.8,271.6 548.1,227.1 548.3,233.5 548.6,220.8 548.9,208.0 549.1,233.5 549.4,214.4 549.7,227.1 549.9,227.1 550.2,176.2 550.5,214.4 550.7,208.0 551.0,201.7 551.3,195.3 551.5,214.4 551.8,208.0 552.1,220.8 552.3,182.6 552.6,195.3 552.9,227.1 553.1,214.4 553.4,195.3 553.7,195.3 553.9,176.2 554.2,227.1 554.5,220.8 554.7,214.4 555.0,233.5 555.3,208.0 555.5,227.1 555.8,169.9 556.1,201.7 556.3,239.8 556.6,227.1 556.9,208.0 557.1,227.1 557.4,201.7 557.7,214.4 558.0,201.7 558.2,208.0 558.5,220.8 558.8,169.9 559.0,195.3 559.3,214.4 559.6,233.5 559.8,220.8 560.1,201.7 560.4,233.5 560.6,271.6 560.9,201.7 561.2,214.4 561.4,201.7 561.7,227.1 562.0,189.0 562.2,189.0 562.5,201.7 562.8,176.2 563.0,220.8 563.3,176.2 563.6,176.2 563.8,239.8 564.1,195.3 564.4,214.4 564.6,214.4 564.9,208.0 565.2,201.7 565.4,220.8 565.7,182.6 566.0,182.6 566.2,220.8 566.5,195.3 566.8,176.2 567.0,220.8 567.3,169.9 567.6,189.0 567.8,201.7 568.1,214.4 568.4,176.2 568.6,252.6 568.9,227.1 569.2,208.0 569.4,227.1 569.7,220.8 570.0,201.7 570.2,214.4 570.5,214.4 570.8,182.6 571.0,189.0 571.3,189.0 571.6,195.3 571.8,176.2 572.1,214.4 572.4,208.0 572.6,176.2 572.9,220.8 573.2,252.6 573.4,233.5 573.7,220.8 574.0,239.8 574.2,201.7 574.5,220.8 574.8,208.0 575.0,239.8 575.3,233.5 575.6,233.5 575.8,214.4 576.1,239.8 576.4,214.4 576.6,208.0 576.9,220.8 577.2,189.0 577.4,195.3 577.7,182.6 578.0,214.4 578.2,189.0 578.5,195.3 578.8,214.4 579.0,189.0 579.3,189.0 579.6,176.2 579.8,220.8 580.1,214.4 580.4,195.3 580.6,176.2 580.9,169.9 581.2,208.0 581.4,220.8 581.7,227.1 582.0,227.1 582.2,220.8 582.5,246.2 582.8,214.4 583.0,252.6 583.3,182.6 583.6,208.0 583.8,208.0 584.1,169.9 584.4,176.2 584.6,169.9 584.9,233.5 585.2,182.6 585.5,220.8 585.7,208.0 586.0,208.0 586.3,246.2 586.5,195.3 586.8,169.9 587.1,220.8 587.3,195.3 587.6,208.0 587.9,169.9 588.1,208.0 588.4,201.7 588.7,195.3 588.9,201.7 589.2,195.3 589.5,227.1 589.7,208.0 590.0,169.9 590.3,195.3 590.5,189.0 590.8,214.4 591.1,195.3 591.3,195.3 591.6,252.6 591.9,214.4 592.1,233.5 592.4,195.3 592.7,169.9 592.9,258.9 593.2,214.4 593.5,214.4 593.7,208.0 594.0,201.7 594.3,189.0 594.5,220.8 594.8,189.0 595.1,220.8 595.3,208.0 595.6,201.7 595.9,195.3 596.1,220.8 596.4,220.8 596.7,195.3 596.9,208.0 597.2,189.0 597.5,227.1 597.7,246.2 598.0,201.7 598.3,195.3 598.5,195.3 598.8,265.3 599.1,246.2 599.3,201.7 599.6,195.3 599.9,176.2 600.1,233.5 600.4,189.0 600.7,208.0 600.9,214.4 601.2,220.8 601.5,239.8 601.7,220.8 602.0,220.8 602.3,201.7 602.5,227.1 602.8,182.6 603.1,195.3 603.3,208.0 603.6,220.8 603.9,220.8 604.1,227.1 604.4,220.8 604.7,208.0 604.9,189.0 605.2,227.1 605.5,214.4 605.7,189.0 606.0,201.7 606.3,252.6 606.5,201.7 606.8,208.0 607.1,220.8 607.3,227.1 607.6,233.5 607.9,227.1 608.1,220.8 608.4,252.6 608.7,220.8 608.9,208.0 609.2,182.6 609.5,214.4 609.7,208.0 610.0,239.8 610.3,195.3 610.5,220.8 610.8,220.8 611.1,169.9 611.4,220.8 611.6,195.3 611.9,239.8 612.2,220.8 612.4,189.0 612.7,195.3 613.0,169.9 613.2,201.7 613.5,201.7 613.8,189.0 614.0,169.9 614.3,233.5 614.6,201.7 614.8,195.3 615.1,208.0 615.4,233.5 615.6,195.3 615.9,201.7 616.2,227.1 616.4,195.3 616.7,233.5 617.0,189.0 617.2,169.9 617.5,189.0 617.8,189.0 618.0,220.8 618.3,208.0 618.6,220.8 618.8,214.4 619.1,195.3 619.4,189.0 619.6,208.0 619.9,246.2 620.2,214.4 620.4,208.0 620.7,189.0 621.0,227.1 621.2,182.6 621.5,220.8 621.8,227.1 622.0,220.8 622.3,189.0 622.6,169.9 622.8,214.4 623.1,220.8 623.4,214.4 623.6,189.0 623.9,220.8 624.2,189.0 624.4,182.6 624.7,201.7 625.0,195.3 625.2,195.3 625.5,182.6 625.8,220.8 626.0,189.0 626.3,208.0 626.6,214.4 626.8,208.0 627.1,208.0 627.4,220.8 627.6,176.2 627.9,214.4 628.2,182.6 628.4,233.5 628.7,169.9 629.0,182.6 629.2,208.0 629.5,208.0 629.8,201.7 630.0,220.8 630.3,176.2 630.6,195.3 630.8,208.0 631.1,208.0 631.4,195.3 631.6,208.0 631.9,189.0 632.2,201.7 632.4,176.2 632.7,195.3 633.0,208.0 633.2,214.4 633.5,214.4 633.8,214.4 634.0,169.9 634.3,157.2 634.6,220.8 634.8,176.2 635.1,208.0 635.4,176.2 635.6,208.0 635.9,182.6 636.2,189.0 636.4,246.2 636.7,227.1 637.0,189.0 637.2,189.0 637.5,208.0 637.8,195.3 638.0,201.7 638.3,182.6 638.6,201.7 638.9,163.5 639.1,201.7 639.4,214.4 639.7,201.7 639.9,201.7 640.2,227.1 640.5,214.4 640.7,258.9 641.0,214.4 641.3,233.5 641.5,208.0 641.8,214.4 642.1,201.7 642.3,208.0 642.6,208.0 642.9,208.0 643.1,214.4 643.4,214.4 643.7,220.8 643.9,189.0 644.2,201.7 644.5,227.1 644.7,208.0 645.0,201.7 645.3,208.0 645.5,195.3 645.8,233.5 646.1,201.7 646.3,239.8 646.6,220.8 646.9,182.6 647.1,201.7 647.4,208.0 647.7,182.6 647.9,182.6 648.2,220.8 648.5,208.0 648.7,233.5 649.0,239.8 649.3,201.7 649.5,169.9 649.8,220.8 650.1,176.2 650.3,195.3 650.6,195.3 650.9,201.7 651.1,163.5 651.4,201.7 651.7,189.0 651.9,220.8 652.2,189.0 652.5,182.6 652.7,227.1 653.0,195.3 653.3,208.0 653.5,201.7 653.8,258.9 654.1,220.8 654.3,182.6 654.6,182.6 654.9,189.0 655.1,189.0 655.4,195.3 655.7,239.8 655.9,182.6 656.2,214.4 656.5,233.5 656.7,227.1 657.0,182.6 657.3,182.6 657.5,189.0 657.8,220.8 658.1,195.3 658.3,208.0 658.6,201.7 658.9,208.0 659.1,195.3 659.4,208.0 659.7,189.0 659.9,208.0 660.2,208.0 660.5,176.2 660.7,169.9 661.0,189.0 661.3,169.9 661.5,195.3 661.8,208.0 662.1,227.1 662.3,195.3 662.6,182.6 662.9,189.0 663.1,169.9 663.4,227.1 663.7,220.8 663.9,252.6 664.2,220.8 664.5,227.1 664.8,195.3 665.0,208.0 665.3,195.3 665.6,214.4 665.8,201.7 666.1,157.2 666.4,195.3 666.6,195.3 666.9,163.5 667.2,163.5 667.4,227.1 667.7,201.7 668.0,195.3 668.2,208.0 668.5,201.7 668.8,195.3 669.0,201.7 669.3,208.0 669.6,220.8 669.8,201.7 670.1,227.1 670.4,201.7 670.6,214.4 670.9,246.2 671.2,201.7 671.4,214.4 671.7,208.0 672.0,201.7 672.2,208.0 672.5,182.6 672.8,220.8 673.0,169.9 673.3,189.0 673.6,169.9 673.8,189.0 674.1,195.3 674.4,182.6 674.6,201.7 674.9,176.2 675.2,182.6 675.4,201.7 675.7,201.7 676.0,201.7 676.2,201.7 676.5,201.7 676.8,214.4 677.0,239.8 677.3,220.8 677.6,239.8 677.8,208.0 678.1,208.0 678.4,239.8 678.6,201.7 678.9,189.0 679.2,201.7 679.4,176.2 679.7,169.9 680.0,176.2 680.2,182.6 680.5,195.3 680.8,195.3 681.0,189.0 681.3,214.4 681.6,214.4 681.8,214.4 682.1,214.4 682.4,208.0 682.6,227.1 682.9,220.8 683.2,176.2 683.4,201.7 683.7,176.2 684.0,189.0 684.2,214.4 684.5,220.8 684.8,201.7 685.0,214.4 685.3,163.5 685.6,195.3 685.8,201.7 686.1,201.7 686.4,189.0 686.6,208.0 686.9,189.0 687.2,195.3 687.4,201.7 687.7,201.7 688.0,220.8 688.2,163.5 688.5,189.0 688.8,233.5 689.0,182.6 689.3,201.7 689.6,182.6 689.8,201.7 690.1,233.5 690.4,189.0 690.6,214.4 690.9,220.8 691.2,208.0 691.5,227.1 691.7,227.1 692.0,195.3 692.3,233.5 692.5,227.1 692.8,208.0 693.1,157.2 693.3,189.0 693.6,233.5 693.9,201.7 694.1,208.0 694.4,208.0 694.7,220.8 694.9,195.3 695.2,176.2 695.5,227.1 695.7,189.0 696.0,258.9 696.3,220.8 696.5,227.1 696.8,176.2 697.1,182.6 697.3,189.0 697.6,208.0 697.9,169.9 698.1,201.7 698.4,227.1 698.7,176.2 698.9,201.7 699.2,208.0 699.5,163.5 699.7,220.8 700.0,227.1 700.3,214.4 700.5,208.0 700.8,246.2 701.1,201.7 701.3,208.0 701.6,195.3 701.9,189.0 702.1,157.2 702.4,189.0 702.7,214.4 702.9,227.1 703.2,195.3 703.5,201.7 703.7,150.8 704.0,189.0 704.3,208.0 704.5,227.1 704.8,208.0 705.1,214.4 705.3,189.0 705.6,189.0 705.9,208.0 706.1,182.6 706.4,201.7 706.7,163.5 706.9,239.8 707.2,189.0 707.5,208.0 707.7,176.2 708.0,176.2 708.3,176.2 708.5,201.7 708.8,176.2 709.1,201.7 709.3,201.7 709.6,208.0 709.9,201.7 710.1,220.8 710.4,201.7 710.7,220.8 710.9,182.6 711.2,163.5 711.5,201.7 711.7,246.2 712.0,195.3 712.3,208.0 712.5,189.0 712.8,182.6 713.1,163.5 713.3,246.2 713.6,252.6 713.9,239.8 714.1,157.2 714.4,176.2 714.7,189.0 714.9,227.1 715.2,201.7 715.5,201.7 715.7,233.5 716.0,201.7 716.3,214.4 716.5,227.1 716.8,220.8 717.1,189.0 717.3,195.3 717.6,195.3 717.9,195.3 718.1,189.0 718.4,169.9 718.7,201.7 719.0,189.0 719.2,214.4 719.5,214.4 719.8,246.2 720.0,233.5 720.3,189.0 720.6,195.3 720.8,214.4 721.1,201.7 721.4,201.7 721.6,176.2 721.9,220.8 722.2,201.7 722.4,208.0 722.7,265.3 723.0,208.0 723.2,201.7 723.5,163.5 723.8,189.0 724.0,220.8 724.3,208.0 724.6,208.0 724.8,201.7 725.1,189.0 725.4,227.1 725.6,182.6 725.9,195.3 726.2,195.3 726.4,169.9 726.7,189.0 727.0,214.4 727.2,163.5 727.5,182.6 727.8,220.8 728.0,163.5 728.3,189.0 728.6,189.0 728.8,239.8 729.1,176.2 729.4,150.8 729.6,176.2 729.9,182.6 730.2,220.8 730.4,182.6 730.7,176.2 731.0,189.0 731.2,195.3 731.5,195.3 731.8,208.0 732.0,176.2 732.3,189.0 732.6,189.0 732.8,163.5 733.1,176.2 733.4,189.0 733.6,201.7 733.9,189.0 734.2,163.5 734.4,163.5 734.7,201.7 735.0,201.7 735.2,189.0 735.5,189.0 735.8,189.0 736.0,227.1 736.3,201.7 736.6,220.8 736.8,214.4 737.1,233.5 737.4,214.4 737.6,195.3 737.9,150.8 738.2,182.6 738.4,189.0 738.7,189.0 739.0,208.0 739.2,220.8 739.5,169.9 739.8,214.4 740.0,214.4 740.3,214.4 740.6,214.4 740.8,227.1 741.1,220.8 741.4,195.3 741.6,201.7 741.9,182.6 742.2,252.6 742.4,176.2 742.7,157.2 743.0,214.4 743.2,163.5 743.5,176.2 743.8,201.7 744.0,214.4 744.3,195.3 744.6,169.9 744.9,208.0 745.1,189.0 745.4,195.3 745.7,220.8 745.9,189.0 746.2,169.9 746.5,189.0 746.7,208.0 747.0,239.8 747.3,201.7 747.5,214.4 747.8,195.3 748.1,208.0 748.3,169.9 748.6,150.8 748.9,182.6 749.1,214.4 749.4,220.8 749.7,201.7 749.9,189.0 750.2,220.8 750.5,182.6 750.7,208.0 751.0,201.7 751.3,201.7 751.5,189.0 751.8,227.1 752.1,176.2 752.3,239.8 752.6,208.0 752.9,214.4 753.1,227.1 753.4,201.7 753.7,189.0 753.9,201.7 754.2,214.4 754.5,208.0 754.7,176.2 755.0,201.7 755.3,208.0 755.5,182.6 755.8,227.1 756.1,201.7 756.3,189.0 756.6,220.8 756.9,220.8 757.1,208.0 757.4,201.7 757.7,195.3 757.9,189.0 758.2,220.8 758.5,163.5 758.7,201.7 759.0,233.5 759.3,214.4 759.5,214.4 759.8,195.3 760.1,201.7 760.3,220.8 760.6,220.8 760.9,201.7 761.1,195.3 761.4,150.8 761.7,182.6 761.9,201.7 762.2,214.4 762.5,201.7 762.7,176.2 763.0,201.7 763.3,182.6 763.5,176.2 763.8,233.5 764.1,214.4 764.3,169.9 764.6,189.0 764.9,201.7 765.1,201.7 765.4,189.0 765.7,195.3 765.9,201.7 766.2,176.2 766.5,182.6 766.7,208.0 767.0,163.5 767.3,182.6 767.5,176.2 767.8,214.4 768.1,182.6 768.3,239.8 768.6,176.2 768.9,214.4 769.1,195.3 769.4,201.7 769.7,220.8 769.9,214.4 770.2,182.6 770.5,208.0 770.7,214.4 771.0,163.5 771.3,189.0 771.5,182.6 771.8,208.0 772.1,239.8 772.4,189.0 772.6,176.2 772.9,182.6 773.2,182.6 773.4,214.4 773.7,208.0 774.0,227.1 774.2,252.6 774.5,220.8 774.8,208.0 775.0,233.5 775.3,208.0 775.6,214.4 775.8,201.7 776.1,214.4 776.4,201.7 776.6,208.0 776.9,157.2 777.2,208.0 777.4,214.4 777.7,189.0 778.0,201.7 778.2,220.8 778.5,208.0 778.8,189.0 779.0,182.6 779.3,201.7 779.6,208.0 779.8,182.6 780.1,208.0 780.4,195.3 780.6,201.7 780.9,176.2 781.2,201.7 781.4,182.6 781.7,208.0 782.0,195.3 782.2,220.8 782.5,220.8 782.8,189.0 783.0,169.9 783.3,189.0 783.6,176.2 783.8,214.4 784.1,201.7 784.4,208.0 784.6,182.6 784.9,189.0 785.2,195.3 785.4,201.7 785.7,189.0 786.0,189.0 786.2,201.7 786.5,208.0 786.8,201.7 787.0,208.0 787.3,176.2 787.6,176.2 787.8,195.3 788.1,227.1 788.4,214.4 788.6,157.2 788.9,157.2 789.2,169.9 789.4,208.0 789.7,189.0 790.0,208.0 790.2,233.5 790.5,233.5 790.8,201.7 791.0,189.0 791.3,176.2 791.6,189.0 791.8,182.6 792.1,201.7 792.4,150.8 792.6,208.0 792.9,208.0 793.2,208.0 793.4,201.7 793.7,214.4 794.0,239.8 794.2,214.4 794.5,208.0 794.8,189.0 795.0,220.8 795.3,208.0 795.6,176.2 795.8,233.5 796.1,252.6 796.4,195.3 796.6,220.8 796.9,163.5 797.2,233.5 797.4,201.7 797.7,176.2 798.0,227.1 798.2,208.0 798.5,195.3 798.8,208.0 799.1,189.0 799.3,214.4 799.6,195.3 799.9,176.2 800.1,189.0 800.4,208.0 800.7,176.2 800.9,214.4 801.2,182.6 801.5,189.0 801.7,220.8 802.0,201.7 802.3,208.0 802.5,208.0 802.8,195.3 803.1,208.0 803.3,169.9 803.6,201.7 803.9,182.6 804.1,195.3 804.4,182.6 804.7,201.7 804.9,233.5 805.2,220.8 805.5,195.3 805.7,182.6 806.0,163.5 806.3,176.2 806.5,189.0 806.8,214.4 807.1,195.3 807.3,195.3 807.6,176.2 807.9,182.6 808.1,208.0 808.4,208.0 808.7,258.9 808.9,201.7 809.2,201.7 809.5,176.2 809.7,176.2 810.0,195.3 810.3,201.7 810.5,227.1 810.8,189.0 811.1,214.4 811.3,208.0 811.6,208.0 811.9,182.6 812.1,195.3 812.4,195.3 812.7,252.6 812.9,227.1 813.2,201.7 813.5,189.0 813.7,189.0 814.0,195.3 814.3,163.5 814.5,150.8 814.8,182.6 815.1,189.0 815.3,189.0 815.6,189.0 815.9,176.2 816.1,214.4 816.4,163.5 816.7,182.6 816.9,182.6 817.2,189.0 817.5,214.4 817.7,214.4 818.0,169.9 818.3,189.0 818.5,189.0 818.8,189.0 819.1,201.7 819.3,227.1 819.6,233.5 819.9,189.0 820.1,189.0 820.4,150.8 820.7,195.3 820.9,189.0 821.2,214.4 821.5,233.5 821.7,208.0 822.0,208.0 822.3,214.4 822.5,208.0 822.8,201.7 823.1,163.5 823.3,182.6 823.6,201.7 823.9,239.8 824.1,220.8 824.4,227.1 824.7,195.3 825.0,189.0 825.2,182.6 825.5,214.4 825.8,195.3 826.0,208.0 826.3,214.4 826.6,208.0 826.8,201.7 827.1,189.0 827.4,157.2 827.6,189.0 827.9,182.6 828.2,195.3 828.4,182.6 828.7,220.8 829.0,227.1 829.2,214.4 829.5,220.8 829.8,208.0 830.0,201.7 830.3,201.7 830.6,208.0 830.8,176.2 831.1,233.5 831.4,189.0 831.6,214.4 831.9,208.0 832.2,195.3 832.4,182.6 832.7,227.1 833.0,220.8 833.2,233.5 833.5,208.0 833.8,189.0 834.0,195.3 834.3,189.0 834.6,201.7 834.8,195.3 835.1,208.0 835.4,214.4 835.6,201.7 835.9,239.8 836.2,220.8 836.4,176.2 836.7,182.6 837.0,214.4 837.2,182.6 837.5,208.0 837.8,189.0 838.0,195.3 838.3,195.3 838.6,163.5 838.8,201.7 839.1,239.8 839.4,169.9 839.6,163.5 839.9,189.0 840.2,189.0 840.4,150.8 840.7,208.0 841.0,163.5 841.2,214.4 841.5,163.5 841.8,252.6 842.0,201.7 842.3,189.0 842.6,182.6 842.8,157.2 843.1,189.0 843.4,189.0 843.6,189.0 843.9,169.9 844.2,176.2 844.4,208.0 844.7,201.7 845.0,189.0 845.2,201.7 845.5,201.7 845.8,182.6 846.0,195.3 846.3,189.0 846.6,176.2 846.8,189.0 847.1,233.5 847.4,201.7 847.6,144.4 847.9,182.6 848.2,208.0 848.4,220.8 848.7,220.8 849.0,239.8 849.2,201.7 849.5,163.5 849.8,214.4 850.0,169.9 850.3,195.3 850.6,208.0 850.8,227.1 851.1,195.3 851.4,201.7 851.6,182.6 851.9,189.0 852.2,208.0 852.5,182.6 852.7,182.6 853.0,182.6 853.3,176.2 853.5,176.2 853.8,189.0 854.1,233.5 854.3,220.8 854.6,233.5 854.9,189.0 855.1,189.0 855.4,201.7 855.7,195.3 855.9,208.0 856.2,157.2 856.5,195.3 856.7,163.5 857.0,176.2 857.3,201.7 857.5,214.4 857.8,239.8 858.1,189.0 858.3,182.6 858.6,220.8 858.9,195.3 859.1,201.7 859.4,214.4 859.7,176.2 859.9,189.0 860.2,157.2 860.5,201.7 860.7,195.3 861.0,182.6 861.3,195.3 861.5,169.9 861.8,208.0 862.1,195.3 862.3,157.2 862.6,189.0 862.9,176.2 863.1,246.2 863.4,195.3 863.7,195.3 863.9,201.7 864.2,189.0 864.5,239.8 864.7,201.7 865.0,189.0" fill="none" stroke="#36B7EE" stroke-width="1.2" marker-start="url(#ml)" marker-mid="url(#ml)" marker-end="url(#ml)"/>
<polyline points="64.3,723.2 64.5,697.8 64.8,693.5 65.1,688.2 65.3,688.9 65.6,677.4 65.9,672.3 66.1,669.8 66.4,672.3 66.7,667.2 66.9,662.1 67.2,668.5 67.5,672.3 67.7,668.5 68.0,657.1 68.3,662.1 68.5,655.8 68.8,645.6 69.1,641.8 69.3,644.3 69.6,638.0 69.9,634.2 70.1,632.9 70.4,618.9 70.7,607.4 70.9,604.9 71.2,604.9 71.5,610.0 71.7,613.8 72.0,617.6 72.3,604.9 72.5,584.6 72.8,565.5 73.1,559.1 73.3,551.5 73.6,561.7 73.9,569.3 74.1,565.5 74.4,569.3 74.7,574.4 74.9,569.3 75.2,575.6 75.5,579.5 75.7,569.3 76.0,554.0 76.3,540.0 76.5,517.1 76.8,503.1 77.1,507.0 77.3,510.8 77.6,529.9 77.9,541.3 78.2,537.5 78.4,521.0 78.7,528.6 79.0,499.3 79.2,487.9 79.5,508.2 79.8,518.4 80.0,504.4 80.3,514.6 80.6,519.7 80.8,505.7 81.1,501.9 81.4,494.2 81.6,489.2 81.9,494.2 82.2,501.9 82.4,503.1 82.7,519.7 83.0,531.1 83.2,522.2 83.5,504.4 83.8,499.3 84.0,498.1 84.3,491.7 84.6,499.3 84.8,512.0 85.1,505.7 85.4,496.8 85.6,490.4 85.9,481.5 86.2,465.0 86.4,479.0 86.7,477.7 87.0,479.0 87.2,480.2 87.5,496.8 87.8,494.2 88.0,485.3 88.3,484.1 88.6,475.2 88.8,468.8 89.1,458.6 89.4,480.2 89.6,494.2 89.9,508.2 90.2,517.1 90.4,541.3 90.7,537.5 91.0,518.4 91.2,512.0 91.5,495.5 91.8,481.5 92.0,470.1 92.3,479.0 92.6,479.0 92.8,475.2 93.1,468.8 93.4,468.8 93.6,482.8 93.9,484.1 94.2,499.3 94.4,498.1 94.7,505.7 95.0,475.2 95.2,477.7 95.5,473.9 95.8,481.5 96.0,489.2 96.3,494.2 96.6,480.2 96.8,479.0 97.1,468.8 97.4,454.8 97.6,457.4 97.9,465.0 98.2,463.7 98.4,458.6 98.7,465.0 99.0,470.1 99.2,472.6 99.5,459.9 99.8,465.0 100.0,459.9 100.3,467.5 100.6,470.1 100.8,484.1 101.1,496.8 101.4,490.4 101.6,473.9 101.9,463.7 102.2,448.4 102.4,435.7 102.7,440.8 103.0,442.1 103.2,448.4 103.5,473.9 103.8,471.3 104.0,468.8 104.3,473.9 104.6,457.4 104.9,439.5 105.1,435.7 105.4,435.7 105.7,435.7 105.9,442.1 106.2,452.3 106.5,462.4 106.7,462.4 107.0,465.0 107.3,476.4 107.5,458.6 107.8,456.1 108.1,468.8 108.3,468.8 108.6,471.3 108.9,471.3 109.1,467.5 109.4,472.6 109.7,465.0 109.9,461.2 110.2,477.7 110.5,482.8 110.7,468.8 111.0,463.7 111.3,458.6 111.5,467.5 111.8,471.3 112.1,471.3 112.3,481.5 112.6,484.1 112.9,477.7 113.1,480.2 113.4,473.9 113.7,472.6 113.9,467.5 114.2,452.3 114.5,443.4 114.7,445.9 115.0,435.7 115.3,454.8 115.5,461.2 115.8,470.1 116.1,473.9 116.3,476.4 116.6,456.1 116.9,447.2 117.1,445.9 117.4,448.4 117.7,454.8 117.9,462.4 118.2,472.6 118.5,465.0 118.7,462.4 119.0,463.7 119.3,449.7 119.5,448.4 119.8,437.0 120.1,425.6 120.3,420.5 120.6,431.9 120.9,442.1 121.1,453.5 121.4,473.9 121.7,487.9 121.9,485.3 122.2,471.3 122.5,472.6 122.7,462.4 123.0,445.9 123.3,451.0 123.5,452.3 123.8,439.5 124.1,435.7 124.3,445.9 124.6,451.0 124.9,471.3 125.1,486.6 125.4,495.5 125.7,493.0 125.9,482.8 126.2,458.6 126.5,457.4 126.7,445.9 127.0,445.9 127.3,445.9 127.5,452.3 127.8,452.3 128.1,459.9 128.3,466.3 128.6,477.7 128.9,475.2 129.1,472.6 129.4,468.8 129.7,456.1 129.9,461.2 130.2,470.1 130.5,470.1 130.8,470.1 131.0,476.4 131.3,457.4 131.6,448.4 131.8,454.8 132.1,462.4 132.4,457.4 132.6,459.9 132.9,471.3 133.2,477.7 133.4,470.1 133.7,466.3 134.0,473.9 134.2,467.5 134.5,461.2 134.8,449.7 135.0,447.2 135.3,431.9 135.6,415.4 135.8,405.2 136.1,429.4 136.4,442.1 136.6,447.2 136.9,468.8 137.2,467.5 137.4,452.3 137.7,453.5 138.0,454.8 138.2,465.0 138.5,486.6 138.8,481.5 139.0,479.0 139.3,482.8 139.6,468.8 139.8,458.6 140.1,454.8 140.4,445.9 140.6,435.7 140.9,419.2 141.2,412.8 141.4,429.4 141.7,430.6 142.0,440.8 142.2,443.4 142.5,448.4 142.8,440.8 143.0,445.9 143.3,447.2 143.6,443.4 143.8,453.5 144.1,454.8 144.4,462.4 144.6,466.3 144.9,479.0 145.2,461.2 145.4,456.1 145.7,452.3 146.0,438.3 146.2,445.9 146.5,444.6 146.8,472.6 147.0,481.5 147.3,490.4 147.6,476.4 147.8,475.2 148.1,458.6 148.4,451.0 148.6,456.1 148.9,461.2 149.2,468.8 149.4,486.6 149.7,481.5 150.0,479.0 150.2,479.0 150.5,480.2 150.8,465.0 151.0,486.6 151.3,493.0 151.6,498.1 151.8,491.7 152.1,484.1 152.4,461.2 152.6,463.7 152.9,451.0 153.2,453.5 153.4,462.4 153.7,470.1 154.0,465.0 154.2,477.7 154.5,472.6 154.8,467.5 155.0,470.1 155.3,465.0 155.6,453.5 155.8,463.7 156.1,457.4 156.4,453.5 156.6,445.9 156.9,461.2 157.2,457.4 157.4,457.4 157.7,457.4 158.0,452.3 158.3,438.3 158.5,437.0 158.8,444.6 159.1,451.0 159.3,465.0 159.6,457.4 159.9,448.4 160.1,437.0 160.4,437.0 160.7,443.4 160.9,459.9 161.2,461.2 161.5,457.4 161.7,445.9 162.0,439.5 162.3,438.3 162.5,447.2 162.8,462.4 163.1,463.7 163.3,472.6 163.6,470.1 163.9,467.5 164.1,485.3 164.4,489.2 164.7,481.5 164.9,489.2 165.2,491.7 165.5,472.6 165.7,467.5 166.0,462.4 166.3,463.7 166.5,462.4 166.8,466.3 167.1,471.3 167.3,473.9 167.6,477.7 167.9,480.2 168.1,472.6 168.4,468.8 168.7,468.8 168.9,472.6 169.2,457.4 169.5,457.4 169.7,454.8 170.0,452.3 170.3,443.4 170.5,454.8 170.8,454.8 171.1,457.4 171.3,440.8 171.6,429.4 171.9,438.3 172.1,451.0 172.4,451.0 172.7,457.4 172.9,458.6 173.2,453.5 173.5,442.1 173.7,456.1 174.0,466.3 174.3,468.8 174.5,472.6 174.8,465.0 175.1,442.1 175.3,434.5 175.6,428.1 175.9,426.8 176.1,420.5 176.4,425.6 176.7,445.9 176.9,451.0 177.2,426.8 177.5,443.4 177.7,449.7 178.0,430.6 178.3,433.2 178.5,454.8 178.8,442.1 179.1,428.1 179.3,433.2 179.6,433.2 179.9,435.7 180.1,448.4 180.4,456.1 180.7,465.0 180.9,465.0 181.2,453.5 181.5,452.3 181.7,454.8 182.0,443.4 182.3,439.5 182.5,437.0 182.8,430.6 183.1,430.6 183.3,431.9 183.6,431.9 183.9,447.2 184.2,448.4 184.4,447.2 184.7,470.1 185.0,485.3 185.2,480.2 185.5,485.3 185.8,490.4 186.0,481.5 186.3,470.1 186.6,461.2 186.8,453.5 187.1,438.3 187.4,424.3 187.6,417.9 187.9,409.0 188.2,411.6 188.4,417.9 188.7,414.1 189.0,421.7 189.2,429.4 189.5,428.1 189.8,429.4 190.0,429.4 190.3,428.1 190.6,434.5 190.8,431.9 191.1,423.0 191.4,424.3 191.6,421.7 191.9,419.2 192.2,415.4 192.4,425.6 192.7,433.2 193.0,439.5 193.2,443.4 193.5,442.1 193.8,437.0 194.0,425.6 194.3,426.8 194.6,430.6 194.8,438.3 195.1,448.4 195.4,442.1 195.6,426.8 195.9,416.6 196.2,412.8 196.4,419.2 196.7,428.1 197.0,437.0 197.2,434.5 197.5,444.6 197.8,438.3 198.0,442.1 198.3,458.6 198.6,463.7 198.8,457.4 199.1,453.5 199.4,453.5 199.6,449.7 199.9,438.3 200.2,421.7 200.4,420.5 200.7,414.1 201.0,412.8 201.2,416.6 201.5,433.2 201.8,431.9 202.0,430.6 202.3,417.9 202.6,440.8 202.8,444.6 203.1,452.3 203.4,465.0 203.6,475.2 203.9,470.1 204.2,465.0 204.4,462.4 204.7,457.4 205.0,444.6 205.2,430.6 205.5,425.6 205.8,416.6 206.0,415.4 206.3,417.9 206.6,426.8 206.8,421.7 207.1,420.5 207.4,421.7 207.6,420.5 207.9,415.4 208.2,420.5 208.4,430.6 208.7,433.2 209.0,433.2 209.2,416.6 209.5,412.8 209.8,403.9 210.0,392.5 210.3,377.2 210.6,382.3 210.8,373.4 211.1,364.5 211.4,374.7 211.7,382.3 211.9,391.2 212.2,411.6 212.5,410.3 212.7,395.0 213.0,417.9 213.3,429.4 213.5,420.5 213.8,429.4 214.1,433.2 214.3,407.7 214.6,402.7 214.9,391.2 215.1,386.1 215.4,382.3 215.7,386.1 215.9,363.2 216.2,374.7 216.5,389.9 216.7,389.9 217.0,386.1 217.3,406.5 217.5,396.3 217.8,381.0 218.1,395.0 218.3,381.0 218.6,374.7 218.9,387.4 219.1,388.7 219.4,379.8 219.7,392.5 219.9,396.3 220.2,391.2 220.5,391.2 220.7,391.2 221.0,393.8 221.3,388.7 221.5,392.5 221.8,401.4 222.1,401.4 222.3,391.2 222.6,375.9 222.9,363.2 223.1,348.0 223.4,350.5 223.7,353.0 223.9,364.5 224.2,373.4 224.5,388.7 224.7,384.8 225.0,393.8 225.3,396.3 225.5,391.2 225.8,382.3 226.1,368.3 226.3,363.2 226.6,360.7 226.9,362.0 227.1,355.6 227.4,372.1 227.7,375.9 227.9,369.6 228.2,375.9 228.5,379.8 228.7,365.8 229.0,364.5 229.3,368.3 229.5,367.0 229.8,356.9 230.1,372.1 230.3,365.8 230.6,368.3 230.9,362.0 231.1,382.3 231.4,373.4 231.7,386.1 231.9,381.0 232.2,382.3 232.5,391.2 232.7,406.5 233.0,403.9 233.3,417.9 233.5,423.0 233.8,410.3 234.1,400.1 234.3,409.0 234.6,397.6 234.9,384.8 235.1,375.9 235.4,375.9 235.7,355.6 235.9,359.4 236.2,381.0 236.5,381.0 236.7,379.8 237.0,401.4 237.3,395.0 237.6,381.0 237.8,378.5 238.1,364.5 238.4,341.6 238.6,341.6 238.9,334.0 239.2,323.8 239.4,328.9 239.7,330.2 240.0,337.8 240.2,359.4 240.5,370.9 240.8,387.4 241.0,391.2 241.3,374.7 241.6,356.9 241.8,362.0 242.1,344.1 242.4,335.2 242.6,349.2 242.9,349.2 243.2,348.0 243.4,355.6 243.7,369.6 244.0,368.3 244.2,369.6 244.5,358.1 244.8,362.0 245.0,367.0 245.3,365.8 245.6,369.6 245.8,370.9 246.1,367.0 246.4,356.9 246.6,349.2 246.9,349.2 247.2,359.4 247.4,355.6 247.7,363.2 248.0,374.7 248.2,373.4 248.5,355.6 248.8,367.0 249.0,377.2 249.3,363.2 249.6,354.3 249.8,362.0 250.1,349.2 250.4,332.7 250.6,335.2 250.9,351.8 251.2,355.6 251.4,350.5 251.7,336.5 252.0,336.5 252.2,332.7 252.5,335.2 252.8,345.4 253.0,358.1 253.3,363.2 253.6,341.6 253.8,331.4 254.1,331.4 254.4,332.7 254.6,327.6 254.9,334.0 255.2,341.6 255.4,321.2 255.7,313.6 256.0,298.4 256.2,300.9 256.5,292.0 256.8,302.2 257.0,298.4 257.3,318.7 257.6,317.4 257.8,312.3 258.1,307.3 258.4,308.5 258.6,303.4 258.9,297.1 259.2,311.1 259.4,320.0 259.7,320.0 260.0,314.9 260.2,326.3 260.5,327.6 260.8,327.6 261.0,328.9 261.3,334.0 261.6,337.8 261.8,334.0 262.1,327.6 262.4,314.9 262.6,313.6 262.9,303.4 263.2,307.3 263.4,311.1 263.7,330.2 264.0,325.1 264.2,316.2 264.5,298.4 264.8,288.2 265.1,276.7 265.3,280.5 265.6,302.2 265.9,308.5 266.1,325.1 266.4,318.7 266.7,318.7 266.9,302.2 267.2,312.3 267.5,304.7 267.7,314.9 268.0,320.0 268.3,346.7 268.5,342.9 268.8,346.7 269.1,359.4 269.3,353.0 269.6,341.6 269.9,342.9 270.1,340.3 270.4,322.5 270.7,326.3 270.9,322.5 271.2,316.2 271.5,308.5 271.7,334.0 272.0,328.9 272.3,327.6 272.5,337.8 272.8,336.5 273.1,316.2 273.3,326.3 273.6,326.3 273.9,316.2 274.1,317.4 274.4,318.7 274.7,309.8 274.9,302.2 275.2,308.5 275.5,313.6 275.7,312.3 276.0,325.1 276.3,332.7 276.5,334.0 276.8,325.1 277.1,326.3 277.3,317.4 277.6,307.3 277.9,307.3 278.1,312.3 278.4,318.7 278.7,313.6 278.9,307.3 279.2,306.0 279.5,307.3 279.7,300.9 280.0,293.3 280.3,294.5 280.5,300.9 280.8,311.1 281.1,307.3 281.3,312.3 281.6,318.7 281.9,308.5 282.1,312.3 282.4,312.3 282.7,317.4 282.9,316.2 283.2,327.6 283.5,314.9 283.7,318.7 284.0,330.2 284.3,339.1 284.5,317.4 284.8,316.2 285.1,316.2 285.3,302.2 285.6,307.3 285.9,316.2 286.1,317.4 286.4,309.8 286.7,312.3 286.9,299.6 287.2,300.9 287.5,311.1 287.7,316.2 288.0,311.1 288.3,317.4 288.5,320.0 288.8,325.1 289.1,339.1 289.3,350.5 289.6,367.0 289.9,370.9 290.1,355.6 290.4,346.7 290.7,339.1 290.9,318.7 291.2,314.9 291.5,306.0 291.8,286.9 292.0,284.4 292.3,280.5 292.6,281.8 292.8,294.5 293.1,307.3 293.4,309.8 293.6,314.9 293.9,312.3 294.2,323.8 294.4,328.9 294.7,337.8 295.0,337.8 295.2,340.3 295.5,334.0 295.8,332.7 296.0,322.5 296.3,330.2 296.6,336.5 296.8,344.1 297.1,354.3 297.4,362.0 297.6,346.7 297.9,337.8 298.2,318.7 298.4,293.3 298.7,283.1 299.0,290.7 299.2,289.4 299.5,307.3 299.8,312.3 300.0,313.6 300.3,312.3 300.6,317.4 300.8,300.9 301.1,316.2 301.4,314.9 301.6,316.2 301.9,302.2 302.2,314.9 302.4,311.1 302.7,317.4 303.0,318.7 303.2,335.2 303.5,328.9 303.8,334.0 304.0,345.4 304.3,331.4 304.6,316.2 304.8,317.4 305.1,297.1 305.4,284.4 305.6,297.1 305.9,309.8 306.2,309.8 306.4,317.4 306.7,311.1 307.0,298.4 307.2,297.1 307.5,300.9 307.8,327.6 308.0,337.8 308.3,346.7 308.6,345.4 308.8,332.7 309.1,298.4 309.4,279.3 309.6,276.7 309.9,257.6 310.2,252.6 310.4,266.6 310.7,285.6 311.0,293.3 311.2,317.4 311.5,318.7 311.8,327.6 312.0,328.9 312.3,328.9 312.6,322.5 312.8,328.9 313.1,314.9 313.4,308.5 313.6,300.9 313.9,309.8 314.2,312.3 314.4,318.7 314.7,318.7 315.0,323.8 315.2,317.4 315.5,320.0 315.8,312.3 316.0,297.1 316.3,302.2 316.6,288.2 316.8,280.5 317.1,289.4 317.4,303.4 317.6,285.6 317.9,289.4 318.2,290.7 318.5,276.7 318.7,279.3 319.0,294.5 319.3,303.4 319.5,302.2 319.8,320.0 320.1,322.5 320.3,330.2 320.6,336.5 320.9,346.7 321.1,345.4 321.4,355.6 321.7,350.5 321.9,339.1 322.2,330.2 322.5,330.2 322.7,317.4 323.0,314.9 323.3,317.4 323.5,308.5 323.8,290.7 324.1,285.6 324.3,286.9 324.6,298.4 324.9,323.8 325.1,334.0 325.4,339.1 325.7,328.9 325.9,317.4 326.2,313.6 326.5,322.5 326.7,321.2 327.0,327.6 327.3,317.4 327.5,318.7 327.8,295.8 328.1,293.3 328.3,283.1 328.6,288.2 328.9,274.2 329.1,280.5 329.4,267.8 329.7,269.1 329.9,272.9 330.2,280.5 330.5,284.4 330.7,318.7 331.0,336.5 331.3,337.8 331.5,318.7 331.8,320.0 332.1,298.4 332.3,276.7 332.6,278.0 332.9,292.0 333.1,294.5 333.4,294.5 333.7,302.2 333.9,302.2 334.2,306.0 334.5,294.5 334.7,306.0 335.0,303.4 335.3,299.6 335.5,300.9 335.8,314.9 336.1,294.5 336.3,298.4 336.6,283.1 336.9,276.7 337.1,283.1 337.4,297.1 337.7,314.9 337.9,339.1 338.2,342.9 338.5,332.7 338.7,331.4 339.0,322.5 339.3,316.2 339.5,312.3 339.8,312.3 340.1,320.0 340.3,303.4 340.6,304.7 340.9,307.3 341.1,311.1 341.4,298.4 341.7,320.0 341.9,321.2 342.2,313.6 342.5,302.2 342.7,297.1 343.0,285.6 343.3,281.8 343.5,286.9 343.8,289.4 344.1,303.4 344.4,303.4 344.6,306.0 344.9,312.3 345.2,326.3 345.4,325.1 345.7,326.3 346.0,318.7 346.2,306.0 346.5,295.8 346.8,290.7 347.0,294.5 347.3,303.4 347.6,325.1 347.8,322.5 348.1,312.3 348.4,306.0 348.6,308.5 348.9,298.4 349.2,309.8 349.4,326.3 349.7,322.5 350.0,313.6 350.2,302.2 350.5,289.4 350.8,275.5 351.0,281.8 351.3,285.6 351.6,286.9 351.8,289.4 352.1,293.3 352.4,283.1 352.6,272.9 352.9,270.4 353.2,264.0 353.4,262.7 353.7,271.6 354.0,280.5 354.2,285.6 354.5,295.8 354.8,295.8 355.0,297.1 355.3,300.9 355.6,295.8 355.8,283.1 356.1,280.5 356.4,279.3 356.6,269.1 356.9,264.0 357.2,279.3 357.4,289.4 357.7,292.0 358.0,306.0 358.2,307.3 358.5,308.5 358.8,308.5 359.0,306.0 359.3,286.9 359.6,298.4 359.8,298.4 360.1,299.6 360.4,298.4 360.6,312.3 360.9,318.7 361.2,325.1 361.4,314.9 361.7,314.9 362.0,307.3 362.2,302.2 362.5,288.2 362.8,293.3 363.0,280.5 363.3,288.2 363.6,279.3 363.8,280.5 364.1,281.8 364.4,304.7 364.6,300.9 364.9,300.9 365.2,298.4 365.4,299.6 365.7,293.3 366.0,290.7 366.2,293.3 366.5,288.2 366.8,281.8 367.0,272.9 367.3,289.4 367.6,294.5 367.8,309.8 368.1,320.0 368.4,334.0 368.6,312.3 368.9,313.6 369.2,311.1 369.4,302.2 369.7,284.4 370.0,278.0 370.2,261.5 370.5,255.1 370.8,264.0 371.1,274.2 371.3,289.4 371.6,303.4 371.9,295.8 372.1,298.4 372.4,297.1 372.7,299.6 372.9,312.3 373.2,317.4 373.5,307.3 373.7,295.8 374.0,297.1 374.3,280.5 374.5,285.6 374.8,283.1 375.1,285.6 375.3,292.0 375.6,284.4 375.9,286.9 376.1,297.1 376.4,306.0 376.7,293.3 376.9,311.1 377.2,299.6 377.5,283.1 377.7,292.0 378.0,295.8 378.3,306.0 378.5,303.4 378.8,298.4 379.1,284.4 379.3,272.9 379.6,261.5 379.9,278.0 380.1,286.9 380.4,306.0 380.7,317.4 380.9,311.1 381.2,299.6 381.5,303.4 381.7,288.2 382.0,288.2 382.3,295.8 382.5,306.0 382.8,312.3 383.1,321.2 383.3,325.1 383.6,321.2 383.9,325.1 384.1,341.6 384.4,345.4 384.7,327.6 384.9,321.2 385.2,312.3 385.5,299.6 385.7,293.3 386.0,318.7 386.3,336.5 386.5,339.1 386.8,322.5 387.1,312.3 387.3,302.2 387.6,278.0 387.9,271.6 388.1,278.0 388.4,290.7 388.7,274.2 388.9,279.3 389.2,279.3 389.5,284.4 389.7,274.2 390.0,283.1 390.3,295.8 390.5,302.2 390.8,308.5 391.1,316.2 391.3,308.5 391.6,299.6 391.9,292.0 392.1,272.9 392.4,253.8 392.7,260.2 392.9,265.3 393.2,265.3 393.5,267.8 393.7,280.5 394.0,283.1 394.3,284.4 394.5,285.6 394.8,295.8 395.1,309.8 395.3,318.7 395.6,309.8 395.9,302.2 396.1,303.4 396.4,284.4 396.7,267.8 396.9,261.5 397.2,270.4 397.5,255.1 397.8,261.5 398.0,281.8 398.3,306.0 398.6,309.8 398.8,308.5 399.1,307.3 399.4,295.8 399.6,270.4 399.9,258.9 400.2,267.8 400.4,261.5 400.7,255.1 401.0,271.6 401.2,274.2 401.5,279.3 401.8,297.1 402.0,307.3 402.3,297.1 402.6,297.1 402.8,292.0 403.1,275.5 403.4,269.1 403.6,272.9 403.9,266.6 404.2,269.1 404.4,257.6 404.7,269.1 405.0,267.8 405.2,271.6 405.5,283.1 405.8,293.3 406.0,275.5 406.3,267.8 406.6,266.6 406.8,250.0 407.1,252.6 407.4,243.7 407.6,238.6 407.9,247.5 408.2,236.0 408.4,237.3 408.7,247.5 409.0,251.3 409.2,252.6 409.5,266.6 409.8,270.4 410.0,267.8 410.3,261.5 410.6,251.3 410.8,242.4 411.1,246.2 411.4,257.6 411.6,260.2 411.9,265.3 412.2,262.7 412.4,237.3 412.7,215.7 413.0,224.6 413.2,220.8 413.5,227.1 413.8,239.8 414.0,258.9 414.3,262.7 414.6,261.5 414.8,258.9 415.1,255.1 415.4,246.2 415.6,227.1 415.9,220.8 416.2,219.5 416.4,232.2 416.7,241.1 417.0,242.4 417.2,252.6 417.5,252.6 417.8,243.7 418.0,238.6 418.3,251.3 418.6,255.1 418.8,261.5 419.1,257.6 419.4,251.3 419.6,251.3 419.9,250.0 420.2,244.9 420.4,243.7 420.7,241.1 421.0,224.6 421.2,213.1 421.5,213.1 421.8,218.2 422.0,228.4 422.3,247.5 422.6,258.9 422.8,272.9 423.1,276.7 423.4,270.4 423.6,266.6 423.9,262.7 424.2,237.3 424.4,223.3 424.7,222.0 425.0,215.7 425.3,210.6 425.5,215.7 425.8,225.8 426.1,233.5 426.3,227.1 426.6,236.0 426.9,239.8 427.1,234.8 427.4,228.4 427.7,236.0 427.9,224.6 428.2,230.9 428.5,225.8 428.7,230.9 429.0,238.6 429.3,258.9 429.5,271.6 429.8,283.1 430.1,279.3 430.3,281.8 430.6,271.6 430.9,251.3 431.1,246.2 431.4,248.7 431.7,242.4 431.9,236.0 432.2,244.9 432.5,257.6 432.7,256.4 433.0,260.2 433.3,271.6 433.5,264.0 433.8,244.9 434.1,243.7 434.3,234.8 434.6,239.8 434.9,243.7 435.1,243.7 435.4,234.8 435.7,238.6 435.9,233.5 436.2,236.0 436.5,233.5 436.7,243.7 437.0,239.8 437.3,233.5 437.5,225.8 437.8,236.0 438.1,246.2 438.3,250.0 438.6,251.3 438.9,256.4 439.1,250.0 439.4,248.7 439.7,253.8 439.9,242.4 440.2,238.6 440.5,237.3 440.7,223.3 441.0,213.1 441.3,218.2 441.5,214.4 441.8,216.9 442.1,219.5 442.3,223.3 442.6,220.8 442.9,228.4 443.1,225.8 443.4,224.6 443.7,229.7 443.9,242.4 444.2,238.6 444.5,241.1 444.7,247.5 445.0,253.8 445.3,244.9 445.5,253.8 445.8,265.3 446.1,257.6 446.3,247.5 446.6,243.7 446.9,239.8 447.1,230.9 447.4,232.2 447.7,220.8 447.9,218.2 448.2,214.4 448.5,213.1 448.7,222.0 449.0,236.0 449.3,241.1 449.5,241.1 449.8,252.6 450.1,239.8 450.3,236.0 450.6,237.3 450.9,243.7 451.1,237.3 451.4,252.6 451.7,252.6 452.0,255.1 452.2,253.8 452.5,257.6 452.8,236.0 453.0,227.1 453.3,228.4 453.6,224.6 453.8,214.4 454.1,225.8 454.4,234.8 454.6,227.1 454.9,219.5 455.2,210.6 455.4,214.4 455.7,218.2 456.0,222.0 456.2,230.9 456.5,247.5 456.8,241.1 457.0,238.6 457.3,237.3 457.6,230.9 457.8,233.5 458.1,251.3 458.4,255.1 458.6,246.2 458.9,248.7 459.2,229.7 459.4,216.9 459.7,209.3 460.0,225.8 460.2,229.7 460.5,242.4 460.8,232.2 461.0,230.9 461.3,219.5 461.6,211.9 461.8,213.1 462.1,220.8 462.4,213.1 462.6,205.5 462.9,209.3 463.2,204.2 463.4,201.7 463.7,208.0 464.0,216.9 464.2,206.8 464.5,218.2 464.8,213.1 465.0,204.2 465.3,208.0 465.6,220.8 465.8,213.1 466.1,218.2 466.4,230.9 466.6,236.0 466.9,229.7 467.2,232.2 467.4,234.8 467.7,243.7 468.0,237.3 468.2,238.6 468.5,224.6 468.8,224.6 469.0,214.4 469.3,219.5 469.6,238.6 469.8,244.9 470.1,244.9 470.4,246.2 470.6,234.8 470.9,223.3 471.2,234.8 471.4,224.6 471.7,224.6 472.0,225.8 472.2,236.0 472.5,238.6 472.8,252.6 473.0,253.8 473.3,258.9 473.6,234.8 473.8,223.3 474.1,225.8 474.4,233.5 474.6,238.6 474.9,250.0 475.2,253.8 475.4,250.0 475.7,246.2 476.0,243.7 476.2,243.7 476.5,248.7 476.8,242.4 477.0,237.3 477.3,236.0 477.6,234.8 477.9,225.8 478.1,218.2 478.4,210.6 478.7,201.7 478.9,201.7 479.2,201.7 479.5,206.8 479.7,214.4 480.0,215.7 480.3,211.9 480.5,208.0 480.8,206.8 481.1,199.1 481.3,194.0 481.6,192.8 481.9,190.2 482.1,197.9 482.4,205.5 482.7,210.6 482.9,216.9 483.2,230.9 483.5,227.1 483.7,224.6 484.0,236.0 484.3,228.4 484.5,218.2 484.8,220.8 485.1,220.8 485.3,203.0 485.6,201.7 485.9,205.5 486.1,200.4 486.4,206.8 486.7,214.4 486.9,219.5 487.2,213.1 487.5,218.2 487.7,214.4 488.0,208.0 488.3,209.3 488.5,216.9 488.8,215.7 489.1,218.2 489.3,223.3 489.6,214.4 489.9,214.4 490.1,205.5 490.4,206.8 490.7,203.0 490.9,206.8 491.2,200.4 491.5,211.9 491.7,208.0 492.0,220.8 492.3,229.7 492.5,232.2 492.8,223.3 493.1,214.4 493.3,208.0 493.6,199.1 493.9,197.9 494.1,211.9 494.4,218.2 494.7,214.4 494.9,220.8 495.2,219.5 495.5,211.9 495.7,215.7 496.0,216.9 496.3,213.1 496.5,220.8 496.8,222.0 497.1,222.0 497.3,224.6 497.6,229.7 497.9,223.3 498.1,218.2 498.4,205.5 498.7,203.0 498.9,190.2 499.2,196.6 499.5,201.7 499.7,209.3 500.0,215.7 500.3,220.8 500.5,220.8 500.8,227.1 501.1,225.8 501.3,224.6 501.6,228.4 501.9,229.7 502.1,225.8 502.4,233.5 502.7,233.5 502.9,224.6 503.2,227.1 503.5,220.8 503.7,219.5 504.0,220.8 504.3,227.1 504.6,219.5 504.8,225.8 505.1,216.9 505.4,215.7 505.6,216.9 505.9,208.0 506.2,211.9 506.4,223.3 506.7,218.2 507.0,220.8 507.2,225.8 507.5,219.5 507.8,214.4 508.0,222.0 508.3,219.5 508.6,225.8 508.8,215.7 509.1,214.4 509.4,213.1 509.6,210.6 509.9,213.1 510.2,218.2 510.4,219.5 510.7,218.2 511.0,223.3 511.2,218.2 511.5,220.8 511.8,223.3 512.0,219.5 512.3,223.3 512.6,225.8 512.8,234.8 513.1,229.7 513.4,229.7 513.6,220.8 513.9,215.7 514.2,206.8 514.4,210.6 514.7,216.9 515.0,224.6 515.2,227.1 515.5,230.9 515.8,228.4 516.0,219.5 516.3,210.6 516.6,204.2 516.8,206.8 517.1,211.9 517.4,213.1 517.6,215.7 517.9,218.2 518.2,211.9 518.4,203.0 518.7,201.7 519.0,200.4 519.2,201.7 519.5,194.0 519.8,195.3 520.0,197.9 520.3,196.6 520.6,200.4 520.8,201.7 521.1,200.4 521.4,192.8 521.6,195.3 521.9,194.0 522.2,192.8 522.4,196.6 522.7,211.9 523.0,215.7 523.2,216.9 523.5,216.9 523.8,209.3 524.0,194.0 524.3,192.8 524.6,190.2 524.8,203.0 525.1,205.5 525.4,215.7 525.6,209.3 525.9,208.0 526.2,205.5 526.4,210.6 526.7,201.7 527.0,213.1 527.2,214.4 527.5,209.3 527.8,206.8 528.0,218.2 528.3,206.8 528.6,209.3 528.8,208.0 529.1,219.5 529.4,218.2 529.6,220.8 529.9,219.5 530.2,223.3 530.4,214.4 530.7,215.7 531.0,213.1 531.2,211.9 531.5,211.9 531.8,211.9 532.1,205.5 532.3,200.4 532.6,190.2 532.9,195.3 533.1,196.6 533.4,190.2 533.7,200.4 533.9,204.2 534.2,192.8 534.5,187.7 534.7,195.3 535.0,189.0 535.3,185.1 535.5,189.0 535.8,190.2 536.1,189.0 536.3,189.0 536.6,199.1 536.9,194.0 537.1,197.9 537.4,197.9 537.7,205.5 537.9,200.4 538.2,206.8 538.5,197.9 538.7,195.3 539.0,200.4 539.3,210.6 539.5,213.1 539.8,224.6 540.1,228.4 540.3,220.8 540.6,216.9 540.9,216.9 541.1,214.4 541.4,225.8 541.7,236.0 541.9,230.9 542.2,234.8 542.5,233.5 542.7,222.0 543.0,210.6 543.3,218.2 543.5,219.5 543.8,223.3 544.1,222.0 544.3,220.8 544.6,219.5 544.9,211.9 545.1,199.1 545.4,194.0 545.7,194.0 545.9,190.2 546.2,191.5 546.5,196.6 546.7,199.1 547.0,205.5 547.3,201.7 547.5,195.3 547.8,210.6 548.1,218.2 548.3,219.5 548.6,227.1 548.9,232.2 549.1,224.6 549.4,222.0 549.7,220.8 549.9,222.0 550.2,215.7 550.5,211.9 550.7,210.6 551.0,205.5 551.3,199.1 551.5,206.8 551.8,205.5 552.1,208.0 552.3,204.2 552.6,204.2 552.9,206.8 553.1,208.0 553.4,203.0 553.7,205.5 553.9,201.7 554.2,201.7 554.5,203.0 554.7,206.8 555.0,214.4 555.3,220.8 555.5,220.8 555.8,210.6 556.1,208.0 556.3,209.3 556.6,213.1 556.9,209.3 557.1,220.8 557.4,220.8 557.7,215.7 558.0,210.6 558.2,210.6 558.5,209.3 558.8,203.0 559.0,199.1 559.3,201.7 559.6,206.8 559.8,206.8 560.1,213.1 560.4,220.8 560.6,232.2 560.9,225.8 561.2,224.6 561.4,224.6 561.7,223.3 562.0,206.8 562.2,204.2 562.5,201.7 562.8,196.6 563.0,195.3 563.3,192.8 563.6,190.2 563.8,197.9 564.1,201.7 564.4,200.4 564.6,208.0 564.9,214.4 565.2,206.8 565.4,211.9 565.7,205.5 566.0,199.1 566.2,201.7 566.5,200.4 566.8,191.5 567.0,199.1 567.3,196.6 567.6,190.2 567.8,191.5 568.1,199.1 568.4,190.2 568.6,206.8 568.9,214.4 569.2,215.7 569.4,218.2 569.7,227.1 570.0,216.9 570.2,214.4 570.5,215.7 570.8,206.8 571.0,200.4 571.3,197.9 571.6,194.0 571.8,186.4 572.1,192.8 572.4,196.6 572.6,194.0 572.9,199.1 573.2,214.4 573.4,218.2 573.7,220.8 574.0,233.5 574.2,229.7 574.5,223.3 574.8,218.2 575.0,222.0 575.3,220.8 575.6,227.1 575.8,225.8 576.1,232.2 576.4,227.1 576.6,222.0 576.9,219.5 577.2,214.4 577.4,205.5 577.7,199.1 578.0,200.4 578.2,194.0 578.5,195.3 578.8,199.1 579.0,200.4 579.3,195.3 579.6,192.8 579.8,197.9 580.1,197.9 580.4,199.1 580.6,196.6 580.9,195.3 581.2,192.8 581.4,194.0 581.7,200.4 582.0,210.6 582.2,220.8 582.5,228.4 582.8,227.1 583.0,232.2 583.3,223.3 583.6,220.8 583.8,213.1 584.1,204.2 584.4,189.0 584.6,186.4 584.9,191.5 585.2,186.4 585.5,196.6 585.7,203.0 586.0,210.6 586.3,213.1 586.5,215.7 586.8,205.5 587.1,208.0 587.3,205.5 587.6,197.9 587.9,192.8 588.1,200.4 588.4,196.6 588.7,196.6 588.9,195.3 589.2,200.4 589.5,204.2 589.7,205.5 590.0,200.4 590.3,199.1 590.5,197.9 590.8,195.3 591.1,192.8 591.3,197.9 591.6,209.3 591.9,214.4 592.1,218.2 592.4,218.2 592.7,213.1 592.9,214.4 593.2,214.4 593.5,210.6 593.7,213.1 594.0,219.5 594.3,205.5 594.5,206.8 594.8,201.7 595.1,204.2 595.3,205.5 595.6,208.0 595.9,203.0 596.1,209.3 596.4,209.3 596.7,206.8 596.9,208.0 597.2,206.8 597.5,208.0 597.7,213.1 598.0,214.4 598.3,211.9 598.5,213.1 598.8,220.8 599.1,220.8 599.3,220.8 599.6,220.8 599.9,216.9 600.1,210.6 600.4,199.1 600.7,200.4 600.9,204.2 601.2,213.1 601.5,214.4 601.7,220.8 602.0,223.3 602.3,220.8 602.5,222.0 602.8,210.6 603.1,205.5 603.3,203.0 603.6,206.8 603.9,205.5 604.1,214.4 604.4,219.5 604.7,219.5 604.9,213.1 605.2,214.4 605.5,211.9 605.7,205.5 606.0,204.2 606.3,216.9 606.5,211.9 606.8,210.6 607.1,216.9 607.3,222.0 607.6,218.2 607.9,223.3 608.1,225.8 608.4,232.2 608.7,230.9 608.9,225.8 609.2,216.9 609.5,215.7 609.7,206.8 610.0,210.6 610.3,208.0 610.5,215.7 610.8,216.9 611.1,209.3 611.4,205.5 611.6,205.5 611.9,209.3 612.2,209.3 612.4,213.1 612.7,208.0 613.0,203.0 613.2,195.3 613.5,191.5 613.8,191.5 614.0,186.4 614.3,199.1 614.6,199.1 614.8,197.9 615.1,201.7 615.4,214.4 615.6,206.8 615.9,206.8 616.2,213.1 616.4,210.6 616.7,210.6 617.0,209.3 617.2,203.0 617.5,195.3 617.8,194.0 618.0,191.5 618.3,195.3 618.6,205.5 618.8,210.6 619.1,211.9 619.4,205.5 619.6,205.5 619.9,210.6 620.2,210.6 620.4,213.1 620.7,213.1 621.0,216.9 621.2,204.2 621.5,205.5 621.8,209.3 622.0,215.7 622.3,208.0 622.6,205.5 622.8,204.2 623.1,203.0 623.4,201.7 623.6,201.7 623.9,211.9 624.2,206.8 624.4,199.1 624.7,196.6 625.0,197.9 625.2,192.8 625.5,191.5 625.8,199.1 626.0,196.6 626.3,199.1 626.6,203.0 626.8,208.0 627.1,205.5 627.4,211.9 627.6,205.5 627.9,205.5 628.2,200.4 628.4,205.5 628.7,195.3 629.0,196.6 629.2,195.3 629.5,200.4 629.8,194.0 630.0,204.2 630.3,203.0 630.6,200.4 630.8,200.4 631.1,201.7 631.4,196.6 631.6,203.0 631.9,201.7 632.2,200.4 632.4,194.0 632.7,194.0 633.0,194.0 633.2,199.1 633.5,201.7 633.8,209.3 634.0,204.2 634.3,194.0 634.6,195.3 634.8,187.7 635.1,186.4 635.4,187.7 635.6,197.9 635.9,190.2 636.2,192.8 636.4,200.4 636.7,210.6 637.0,206.8 637.2,208.0 637.5,211.9 637.8,201.7 638.0,196.6 638.3,195.3 638.6,197.9 638.9,189.0 639.1,190.2 639.4,192.8 639.7,196.6 639.9,196.6 640.2,209.3 640.5,211.9 640.7,220.8 641.0,223.3 641.3,229.7 641.5,225.8 641.8,225.8 642.1,214.4 642.3,213.1 642.6,208.0 642.9,208.0 643.1,208.0 643.4,210.6 643.7,213.1 643.9,209.3 644.2,208.0 644.5,210.6 644.7,209.3 645.0,205.5 645.3,209.3 645.5,208.0 645.8,209.3 646.1,208.0 646.3,215.7 646.6,218.2 646.9,215.7 647.1,209.3 647.4,210.6 647.7,199.1 647.9,191.5 648.2,199.1 648.5,200.4 648.7,205.5 649.0,216.9 649.3,220.8 649.5,210.6 649.8,213.1 650.1,201.7 650.3,192.8 650.6,191.5 650.9,197.9 651.1,186.4 651.4,191.5 651.7,190.2 651.9,195.3 652.2,192.8 652.5,196.6 652.7,201.7 653.0,203.0 653.3,200.4 653.5,203.0 653.8,218.2 654.1,216.9 654.3,214.4 654.6,209.3 654.9,206.8 655.1,192.8 655.4,187.7 655.7,199.1 655.9,199.1 656.2,204.2 656.5,213.1 656.7,219.5 657.0,208.0 657.3,208.0 657.5,203.0 657.8,200.4 658.1,194.0 658.3,199.1 658.6,203.0 658.9,206.8 659.1,201.7 659.4,204.2 659.7,200.4 659.9,201.7 660.2,201.7 660.5,197.9 660.7,190.2 661.0,190.2 661.3,182.6 661.5,180.1 661.8,186.4 662.1,197.9 662.3,199.1 662.6,201.7 662.9,200.4 663.1,192.8 663.4,192.8 663.7,197.9 663.9,211.9 664.2,218.2 664.5,229.7 664.8,223.3 665.0,220.8 665.3,209.3 665.6,208.0 665.8,203.0 666.1,195.3 666.4,192.8 666.6,192.8 666.9,182.6 667.2,175.0 667.4,189.0 667.7,190.2 668.0,190.2 668.2,199.1 668.5,206.8 668.8,200.4 669.0,200.4 669.3,203.0 669.6,205.5 669.8,205.5 670.1,211.9 670.4,211.9 670.6,213.1 670.9,218.2 671.2,218.2 671.4,215.7 671.7,216.9 672.0,214.4 672.2,206.8 672.5,203.0 672.8,204.2 673.0,196.6 673.3,194.0 673.6,186.4 673.8,187.7 674.1,182.6 674.4,185.1 674.6,187.7 674.9,189.0 675.2,187.7 675.4,189.0 675.7,192.8 676.0,192.8 676.2,197.9 676.5,201.7 676.8,204.2 677.0,211.9 677.3,215.7 677.6,223.3 677.8,224.6 678.1,223.3 678.4,223.3 678.6,219.5 678.9,209.3 679.2,208.0 679.4,201.7 679.7,187.7 680.0,182.6 680.2,181.3 680.5,180.1 680.8,183.9 681.0,187.7 681.3,195.3 681.6,201.7 681.8,205.5 682.1,209.3 682.4,213.1 682.6,215.7 682.9,216.9 683.2,209.3 683.4,206.8 683.7,200.4 684.0,192.8 684.2,191.5 684.5,200.4 684.8,200.4 685.0,208.0 685.3,203.0 685.6,199.1 685.8,195.3 686.1,195.3 686.4,190.2 686.6,199.1 686.9,197.9 687.2,196.6 687.4,196.6 687.7,199.1 688.0,201.7 688.2,196.6 688.5,195.3 688.8,201.7 689.0,197.9 689.3,194.0 689.6,197.9 689.8,200.4 690.1,200.4 690.4,201.7 690.6,204.2 690.9,211.9 691.2,213.1 691.5,211.9 691.7,219.5 692.0,215.7 692.3,218.2 692.5,222.0 692.8,218.2 693.1,204.2 693.3,203.0 693.6,203.0 693.9,197.9 694.1,197.9 694.4,208.0 694.7,214.4 694.9,206.8 695.2,201.7 695.5,205.5 695.7,201.7 696.0,209.3 696.3,214.4 696.5,224.6 696.8,214.4 697.1,213.1 697.3,199.1 697.6,196.6 697.9,185.1 698.1,190.2 698.4,199.1 698.7,196.6 698.9,195.3 699.2,203.0 699.5,195.3 699.7,194.0 700.0,204.2 700.3,206.8 700.5,206.8 700.8,223.3 701.1,219.5 701.3,215.7 701.6,211.9 701.9,208.0 702.1,190.2 702.4,187.7 702.7,189.0 702.9,195.3 703.2,196.6 703.5,205.5 703.7,197.9 704.0,192.8 704.3,189.0 704.5,195.3 704.8,196.6 705.1,209.3 705.3,209.3 705.6,205.5 705.9,201.7 706.1,196.6 706.4,194.0 706.7,189.0 706.9,199.1 707.2,195.3 707.5,200.4 707.7,195.3 708.0,197.9 708.3,185.1 708.5,187.7 708.8,181.3 709.1,186.4 709.3,191.5 709.6,197.9 709.9,197.9 710.1,206.8 710.4,206.8 710.7,210.6 710.9,205.5 711.2,197.9 711.5,194.0 711.7,203.0 712.0,197.9 712.3,203.0 712.5,208.0 712.8,204.2 713.1,187.7 713.3,197.9 713.6,206.8 713.9,216.9 714.1,211.9 714.4,214.4 714.7,203.0 714.9,197.9 715.2,190.2 715.5,199.1 715.7,210.6 716.0,213.1 716.3,210.6 716.5,215.7 716.8,219.5 717.1,210.6 717.3,209.3 717.6,205.5 717.9,199.1 718.1,192.8 718.4,189.0 718.7,190.2 719.0,189.0 719.2,192.8 719.5,197.9 719.8,213.1 720.0,219.5 720.3,219.5 720.6,215.7 720.8,215.7 721.1,206.8 721.4,200.4 721.6,197.9 721.9,203.0 722.2,200.4 722.4,201.7 722.7,214.4 723.0,220.8 723.2,216.9 723.5,209.3 723.8,205.5 724.0,196.6 724.3,196.6 724.6,197.9 724.8,205.5 725.1,205.5 725.4,206.8 725.6,201.7 725.9,199.1 726.2,197.9 726.4,194.0 726.7,186.4 727.0,192.8 727.2,186.4 727.5,183.9 727.8,194.0 728.0,189.0 728.3,183.9 728.6,189.0 728.8,200.4 729.1,191.5 729.4,189.0 729.6,186.4 729.9,185.1 730.2,181.3 730.4,182.6 730.7,187.7 731.0,190.2 731.2,192.8 731.5,187.7 731.8,192.8 732.0,192.8 732.3,192.8 732.6,191.5 732.8,185.1 733.1,178.8 733.4,181.3 733.6,183.9 733.9,183.9 734.2,183.9 734.4,181.3 734.7,183.9 735.0,183.9 735.2,183.9 735.5,189.0 735.8,194.0 736.0,199.1 736.3,199.1 736.6,205.5 736.8,210.6 737.1,219.5 737.4,216.9 737.6,215.7 737.9,201.7 738.2,195.3 738.4,186.4 738.7,181.3 739.0,183.9 739.2,197.9 739.5,195.3 739.8,200.4 740.0,205.5 740.3,206.8 740.6,205.5 740.8,216.9 741.1,218.2 741.4,214.4 741.6,211.9 741.9,205.5 742.2,210.6 742.4,201.7 742.7,194.0 743.0,196.6 743.2,192.8 743.5,177.5 743.8,182.6 744.0,194.0 744.3,190.2 744.6,191.5 744.9,197.9 745.1,195.3 745.4,191.5 745.7,196.6 745.9,200.4 746.2,192.8 746.5,192.8 746.7,195.3 747.0,199.1 747.3,201.7 747.5,210.6 747.8,211.9 748.1,211.9 748.3,197.9 748.6,187.7 748.9,181.3 749.1,185.1 749.4,187.7 749.7,194.0 749.9,201.7 750.2,209.3 750.5,203.0 750.7,200.4 751.0,200.4 751.3,203.0 751.5,196.6 751.8,205.5 752.1,199.1 752.3,206.8 752.6,208.0 752.9,213.1 753.1,213.1 753.4,218.2 753.7,208.0 753.9,206.8 754.2,206.8 754.5,203.0 754.7,197.9 755.0,200.4 755.3,201.7 755.5,195.3 755.8,199.1 756.1,204.2 756.3,201.7 756.6,204.2 756.9,211.9 757.1,208.0 757.4,208.0 757.7,209.3 757.9,203.0 758.2,203.0 758.5,194.0 758.7,194.0 759.0,201.7 759.3,206.8 759.5,205.5 759.8,211.9 760.1,211.9 760.3,209.3 760.6,210.6 760.9,208.0 761.1,208.0 761.4,197.9 761.7,190.2 761.9,186.4 762.2,189.0 762.5,190.2 762.7,195.3 763.0,199.1 763.3,195.3 763.5,187.7 763.8,194.0 764.1,201.7 764.3,195.3 764.6,196.6 764.9,201.7 765.1,195.3 765.4,190.2 765.7,195.3 765.9,197.9 766.2,192.8 766.5,189.0 766.7,192.8 767.0,186.4 767.3,182.6 767.5,182.6 767.8,189.0 768.1,183.9 768.3,199.1 768.6,197.9 768.9,205.5 769.1,201.7 769.4,205.5 769.7,201.7 769.9,209.3 770.2,203.0 770.5,205.5 770.7,208.0 771.0,196.6 771.3,191.5 771.5,191.5 771.8,191.5 772.1,196.6 772.4,201.7 772.6,199.1 772.9,199.1 773.2,194.0 773.4,189.0 773.7,192.8 774.0,203.0 774.2,216.9 774.5,224.6 774.8,223.3 775.0,228.4 775.3,224.6 775.6,216.9 775.8,213.1 776.1,214.4 776.4,208.0 776.6,208.0 776.9,196.6 777.2,197.9 777.4,197.9 777.7,195.3 778.0,194.0 778.2,206.8 778.5,206.8 778.8,201.7 779.0,200.4 779.3,200.4 779.6,197.9 779.8,192.8 780.1,196.6 780.4,199.1 780.6,199.1 780.9,192.8 781.2,196.6 781.4,191.5 781.7,194.0 782.0,192.8 782.2,201.7 782.5,205.5 782.8,206.8 783.0,199.1 783.3,197.9 783.6,189.0 783.8,187.7 784.1,190.2 784.4,197.9 784.6,196.6 784.9,199.1 785.2,195.3 785.4,195.3 785.7,191.5 786.0,192.8 786.2,195.3 786.5,197.9 786.8,197.9 787.0,201.7 787.3,199.1 787.6,194.0 787.8,191.5 788.1,196.6 788.4,197.9 788.6,194.0 788.9,190.2 789.2,185.1 789.4,181.3 789.7,176.2 790.0,186.4 790.2,201.7 790.5,214.4 790.8,213.1 791.0,213.1 791.3,206.8 791.6,197.9 791.8,187.7 792.1,187.7 792.4,180.1 792.6,186.4 792.9,190.2 793.2,195.3 793.4,195.3 793.7,208.0 794.0,214.4 794.2,215.7 794.5,215.7 794.8,213.1 795.0,214.4 795.3,208.0 795.6,200.4 795.8,205.5 796.1,218.2 796.4,213.1 796.6,215.7 796.9,213.1 797.2,213.1 797.4,203.0 797.7,199.1 798.0,200.4 798.2,209.3 798.5,201.7 798.8,203.0 799.1,205.5 799.3,203.0 799.6,200.4 799.9,196.6 800.1,192.8 800.4,196.6 800.7,189.0 800.9,192.8 801.2,194.0 801.5,194.0 801.7,196.6 802.0,201.7 802.3,200.4 802.5,205.5 802.8,206.8 803.1,204.2 803.3,197.9 803.6,196.6 803.9,191.5 804.1,191.5 804.4,186.4 804.7,192.8 804.9,199.1 805.2,206.8 805.5,206.8 805.7,206.8 806.0,199.1 806.3,187.7 806.5,181.3 806.8,185.1 807.1,187.7 807.3,194.0 807.6,194.0 807.9,192.8 808.1,191.5 808.4,194.0 808.7,206.8 808.9,211.9 809.2,215.7 809.5,209.3 809.7,203.0 810.0,190.2 810.3,190.2 810.5,195.3 810.8,197.9 811.1,205.5 811.3,208.0 811.6,209.3 811.9,200.4 812.1,201.7 812.4,197.9 812.7,206.8 812.9,210.6 813.2,214.4 813.5,213.1 813.7,211.9 814.0,200.4 814.3,187.7 814.5,177.5 814.8,176.2 815.1,176.2 815.3,175.0 815.6,180.1 815.9,185.1 816.1,191.5 816.4,186.4 816.7,185.1 816.9,183.9 817.2,186.4 817.5,186.4 817.7,196.6 818.0,194.0 818.3,195.3 818.5,195.3 818.8,190.2 819.1,187.7 819.3,199.1 819.6,208.0 819.9,208.0 820.1,208.0 820.4,197.9 820.7,191.5 820.9,182.6 821.2,187.7 821.5,196.6 821.7,208.0 822.0,210.6 822.3,215.7 822.5,214.4 822.8,208.0 823.1,199.1 823.3,194.0 823.6,191.5 823.9,197.9 824.1,201.7 824.4,214.4 824.7,216.9 825.0,214.4 825.2,203.0 825.5,201.7 825.8,195.3 826.0,197.9 826.3,203.0 826.6,208.0 826.8,205.5 827.1,204.2 827.4,194.0 827.6,189.0 827.9,183.9 828.2,182.6 828.4,181.3 828.7,194.0 829.0,201.7 829.2,208.0 829.5,213.1 829.8,218.2 830.0,214.4 830.3,209.3 830.6,208.0 830.8,199.1 831.1,204.2 831.4,201.7 831.6,204.2 831.9,204.2 832.2,208.0 832.4,197.9 832.7,205.5 833.0,206.8 833.2,211.9 833.5,214.4 833.8,215.7 834.0,209.3 834.3,203.0 834.6,196.6 834.8,194.0 835.1,197.9 835.4,201.7 835.6,204.2 835.9,211.9 836.2,216.9 836.4,210.6 836.7,204.2 837.0,206.8 837.2,195.3 837.5,192.8 837.8,195.3 838.0,197.9 838.3,194.0 838.6,190.2 838.8,189.0 839.1,199.1 839.4,194.0 839.6,187.7 839.9,192.8 840.2,190.2 840.4,172.4 840.7,180.1 841.0,180.1 841.2,185.1 841.5,180.1 841.8,200.4 842.0,199.1 842.3,204.2 842.6,197.9 842.8,196.6 843.1,183.9 843.4,181.3 843.6,181.3 843.9,178.8 844.2,182.6 844.4,186.4 844.7,189.0 845.0,189.0 845.2,195.3 845.5,200.4 845.8,195.3 846.0,194.0 846.3,194.0 846.6,189.0 846.8,186.4 847.1,196.6 847.4,197.9 847.6,189.0 847.9,190.2 848.2,194.0 848.4,191.5 848.7,195.3 849.0,214.4 849.2,218.2 849.5,209.3 849.8,208.0 850.0,197.9 850.3,189.0 850.6,190.2 850.8,203.0 851.1,199.1 851.4,205.5 851.6,203.0 851.9,199.1 852.2,195.3 852.5,192.8 852.7,189.0 853.0,189.0 853.3,186.4 853.5,180.1 853.8,181.3 854.1,191.5 854.3,199.1 854.6,210.6 854.9,213.1 855.1,213.1 855.4,206.8 855.7,201.7 855.9,196.6 856.2,190.2 856.5,191.5 856.7,183.9 857.0,180.1 857.3,178.8 857.5,190.2 857.8,199.1 858.1,204.2 858.3,205.5 858.6,209.3 858.9,205.5 859.1,197.9 859.4,203.0 859.7,201.7 859.9,195.3 860.2,187.7 860.5,187.7 860.7,183.9 861.0,185.1 861.3,186.4 861.5,189.0 861.8,190.2 862.1,190.2 862.3,185.1 862.6,183.9 862.9,185.1 863.1,192.8 863.4,192.8 863.7,200.4 863.9,203.0 864.2,205.5 864.5,204.2 864.7,205.5 865.0,204.2" fill="none" stroke="#176FC2" stroke-width="1.45" marker-start="url(#md)" marker-mid="url(#md)" marker-end="url(#md)"/>
<use href="#star" x="90.7" y="489.8"/><use href="#star" x="117.4" y="470.7"/><use href="#star" x="144.1" y="449.7"/><use href="#star" x="170.8" y="438.3"/><use href="#star" x="197.5" y="431.9"/><use href="#star" x="224.2" y="348.0"/><use href="#star" x="250.9" y="323.8"/><use href="#star" x="277.6" y="299.6"/><use href="#star" x="304.3" y="283.1"/><use href="#star" x="331.0" y="279.3"/><use href="#star" x="357.7" y="278.0"/><use href="#star" x="384.4" y="271.3"/><use href="#star" x="411.1" y="237.9"/><use href="#star" x="437.8" y="221.4"/><use href="#star" x="464.5" y="207.4"/><use href="#star" x="491.2" y="201.9"/><use href="#star" x="517.9" y="197.2"/><use href="#star" x="544.6" y="196.0"/><use href="#star" x="571.3" y="191.5"/><use href="#star" x="598.0" y="191.5"/><use href="#star" x="624.7" y="189.6"/><use href="#star" x="651.4" y="189.0"/><use href="#star" x="678.1" y="188.3"/><use href="#star" x="704.8" y="187.7"/><use href="#star" x="731.5" y="188.6"/><use href="#star" x="758.2" y="186.1"/><use href="#star" x="784.9" y="187.7"/><use href="#star" x="811.6" y="186.1"/><use href="#star" x="838.3" y="186.1"/><use href="#star" x="865.0" y="182.0"/>
<g stroke="#262626" stroke-width="1" shape-rendering="crispEdges">
<line x1="63.5" y1="119" x2="63.5" y2="755.5"/><line x1="63" y1="755.5" x2="866" y2="755.5"/>
<line x1="64" y1="119.5" x2="72" y2="119.5"/>
<line x1="64" y1="691.4" x2="72" y2="691.4"/><line x1="64" y1="627.8" x2="72" y2="627.8"/><line x1="64" y1="564.2" x2="72" y2="564.2"/><line x1="64" y1="500.6" x2="72" y2="500.6"/><line x1="64" y1="437.0" x2="72" y2="437.0"/><line x1="64" y1="373.4" x2="72" y2="373.4"/><line x1="64" y1="309.8" x2="72" y2="309.8"/><line x1="64" y1="246.2" x2="72" y2="246.2"/><line x1="64" y1="182.60000000000002" x2="72" y2="182.60000000000002"/><line x1="64" y1="119.0" x2="72" y2="119.0"/><line x1="197.5" y1="755" x2="197.5" y2="747"/><line x1="331.0" y1="755" x2="331.0" y2="747"/><line x1="464.5" y1="755" x2="464.5" y2="747"/><line x1="598.0" y1="755" x2="598.0" y2="747"/><line x1="731.5" y1="755" x2="731.5" y2="747"/><line x1="865.0" y1="755" x2="865.0" y2="747"/>
</g>
<g font-family="Liberation Sans" font-size="11.7" fill="#404040"><text x="58.5" y="759.3" text-anchor="end">0</text><text x="58.5" y="695.7" text-anchor="end">10</text><text x="58.5" y="632.1" text-anchor="end">20</text><text x="58.5" y="568.5" text-anchor="end">30</text><text x="58.5" y="504.9" text-anchor="end">40</text><text x="58.5" y="441.3" text-anchor="end">50</text><text x="58.5" y="377.7" text-anchor="end">60</text><text x="58.5" y="314.1" text-anchor="end">70</text><text x="58.5" y="250.5" text-anchor="end">80</text><text x="58.5" y="186.9" text-anchor="end">90</text><text x="58.5" y="123.3" text-anchor="end">100</text><text x="64.0" y="769.6" text-anchor="middle">0</text><text x="197.5" y="769.6" text-anchor="middle">500</text><text x="331.0" y="769.6" text-anchor="middle">1000</text><text x="464.5" y="769.6" text-anchor="middle">1500</text><text x="598.0" y="769.6" text-anchor="middle">2000</text><text x="731.5" y="769.6" text-anchor="middle">2500</text><text x="865.0" y="769.6" text-anchor="middle">3000</text></g>
<text x="465" y="114.2" text-anchor="middle" font-family="Liberation Sans" font-size="13" font-weight="bold" fill="#262626">Episode reward for rlFunctionEnv with rlPGAgent</text>
<text x="465" y="784.4" text-anchor="middle" font-family="Liberation Sans" font-size="13" fill="#262626">Episode Number</text>
<text transform="translate(32.5,438) rotate(-90)" text-anchor="middle" font-family="Liberation Sans" font-size="13" fill="#262626">Episode Reward</text>
</svg>
<!-- divider -->
<div class="a" style="left:900px;top:59px;width:1px;height:773px;background:#bdbdbd"></div>
<!-- right panel header -->
<div class="a" style="left:901px;top:59px;width:301px;height:23px;background:#fff;border-bottom:1px solid #c4c4c4"></div>
<div class="t" style="left:907.5px;top:62.5px;font-size:13px;color:#222">Training Progress</div>
<div class="a" style="left:1182px;top:65px;width:2px;height:2px;background:#666;box-shadow:0 4px 0 #666,0 8px 0 #666"></div>
<!-- progress -->
<div class="a" style="left:911px;top:97px;width:160px;height:15px;background:#fff"></div>
<div class="a" style="left:911px;top:97px;width:90px;height:15px;background:#2688dc"></div>
<div class="a" style="left:1081px;top:92px;width:109px;height:25px;border:1px solid #c4c4c4;border-radius:4px;background:#f3f3f3"></div>
<div class="t" style="left:1081px;top:97px;width:109px;text-align:center;color:#a5a5a5">Training stopped</div>
<div class="t" style="left:911px;top:127.6px">Episode number:</div>
<div class="t" style="left:1041px;top:127.6px">3000/5000</div>
<div class="t" style="left:911px;top:152.8px">Start time:</div>
<div class="t" style="left:1041px;top:152.8px">24-Apr-2025 21:26:33</div>
<div class="t" style="left:911px;top:178.3px">Duration:</div>
<div class="t" style="left:1041px;top:178.3px">00:29:14</div>
<div class="t" style="left:911px;top:202.6px">Final result:</div>
<div class="t" style="left:1041px;top:201.2px">Training finished after all
agents reached stop
training criteria.</div>
<!-- Training information panel -->
<div class="a" style="left:911px;top:258px;width:280px;height:270px;border:1px solid #fff"></div>
<div class="a" style="left:912px;top:259px;width:278px;height:19px;background:#efefef;border-bottom:1px solid #fff"></div>
<div class="t b" style="left:915px;top:261px;color:#111">Training Information</div>
<div class="a" style="left:922px;top:289px;width:258px;height:95px;border:1px solid #8c8c8c;background:#fff"></div>
<div class="a" style="left:923px;top:290px;width:256px;height:27px;background:#f4f4f4;border-bottom:1px solid #8c8c8c"></div>
<div class="a" style="left:923px;top:317px;width:256px;height:22px;background:#2688dc"></div>
<div class="a" style="left:1051px;top:290px;width:1px;height:49px;background:#8c8c8c"></div>
<div class="t b" style="left:926px;top:296.6px;color:#111">Agent</div>
<div class="t b" style="left:1055px;top:296.6px;color:#111;letter-spacing:-0.3px">Status</div>
<div class="t b" style="left:926px;top:320px;color:#fff;letter-spacing:-0.4px">rlPGAgent</div>
<div class="t b" style="left:1055px;top:320px;color:#fff;letter-spacing:-0.5px">Training finished</div>
<div class="t b" style="left:922.5px;top:394.6px;color:#111">Episode Information (rlPGAgent):</div>
<div class="t" style="left:922.5px;top:419.6px">Episode reward:</div>
<div class="t" style="left:1042.5px;top:419.6px">85</div>
<div class="t" style="left:922.5px;top:444.6px">Average reward:</div>
<div class="t" style="left:1042.5px;top:444.6px">89.4</div>
<div class="t" style="left:922.5px;top:469.6px">Evaluation statistic:</div>
<div class="t" style="left:1042.5px;top:469.6px">90.2</div>
<div class="a" style="left:1070px;top:494px;width:110px;height:23px;border:1px solid #7a7a7a;border-radius:4px;background:#f5f5f5"></div>
<div class="t" style="left:1070px;top:498px;width:110px;text-align:center">More Details...</div>
<!-- plot options -->
<div class="a" style="left:911px;top:538px;width:280px;height:90px;border:1px solid #fff"></div>
<div class="a" style="left:912px;top:539px;width:278px;height:20px;background:#efefef;border-bottom:1px solid #fff"></div>
<div class="t b" style="left:915px;top:541px;color:#111">Plot Options</div>
<div class="a" style="left:922px;top:570px;width:14px;height:14px;border:1px solid #333;background:#fff"></div>
<svg class="a" style="left:922px;top:570px" width="14" height="14"><path d="M3 7.2L5.6 10.2L11 3.6" fill="none" stroke="#111" stroke-width="1.8"/></svg>
<div class="t" style="left:939px;top:570px">Show evaluation statistic</div>
<div class="a" style="left:922px;top:600px;width:14px;height:14px;border:1px solid #333;background:#fff"></div>
<div class="t" style="left:939px;top:600px">Show last N episodes</div>
<div class="a" style="left:1066px;top:596px;width:114px;height:22px;border:1px solid #cfcfcf;background:#f5f5f5"></div>
<div class="t" style="left:1066px;top:600px;width:109px;text-align:right;color:#ababab">5000</div>
<!-- legend -->
<div class="a" style="left:911px;top:639px;width:280px;height:92px;border:1px solid #fff"></div>
<div class="a" style="left:917px;top:645px;width:268px;height:80px;background:#fff"></div>
<svg class="a" style="left:917px;top:645px" width="268" height="80">
<line x1="56" y1="8.5" x2="96" y2="8.5" stroke="#36B7EE" stroke-width="1"/><circle cx="76" cy="8.5" r="1.6" fill="#36B7EE"/>
<line x1="56" y1="29.5" x2="96" y2="29.5" stroke="#176FC2" stroke-width="1"/><circle cx="76" cy="29.5" r="1.6" fill="#176FC2"/>
<g stroke="#D2109A" stroke-width="0.8"><line x1="71" y1="62" x2="81" y2="62"/><line x1="76" y1="57" x2="76" y2="67"/><line x1="72.5" y1="58.5" x2="79.5" y2="65.5"/><line x1="72.5" y1="65.5" x2="79.5" y2="58.5"/></g>
</svg>
<div class="t" style="left:1017.5px;top:648px;font-size:10.7px;line-height:13px">Episode reward</div>
<div class="t" style="left:1017.5px;top:668.7px;font-size:10.7px;line-height:13px">Average reward</div>
<div class="t" style="left:1017.5px;top:694.5px;font-size:10.7px;line-height:11.6px">Evaluation statistic
(MeanEpisodeReward)</div>
<!-- status bar -->
<div class="a" style="left:0;top:808px;width:1202px;height:24px;background:#e6e6e6;border-top:1px solid #b4b4b4"></div>
<div class="a" style="left:0;top:808px;width:900px;height:1px;background:#8a8a8a"></div>
<div class="a" style="left:900px;top:808px;width:1px;height:24px;background:#bdbdbd"></div>
<svg class="a" style="left:1185px;top:813px" width="12" height="14"><polygon points="1,1 8,7 1,13" fill="#8c8c8c"/><rect x="9" y="1" width="2" height="12" fill="#8c8c8c"/></svg>
<!-- window border -->
<div class="a" style="left:0;top:0;width:1202px;height:832px;border:1px solid #adadad;pointer-events:none"></div>
</body></html>
